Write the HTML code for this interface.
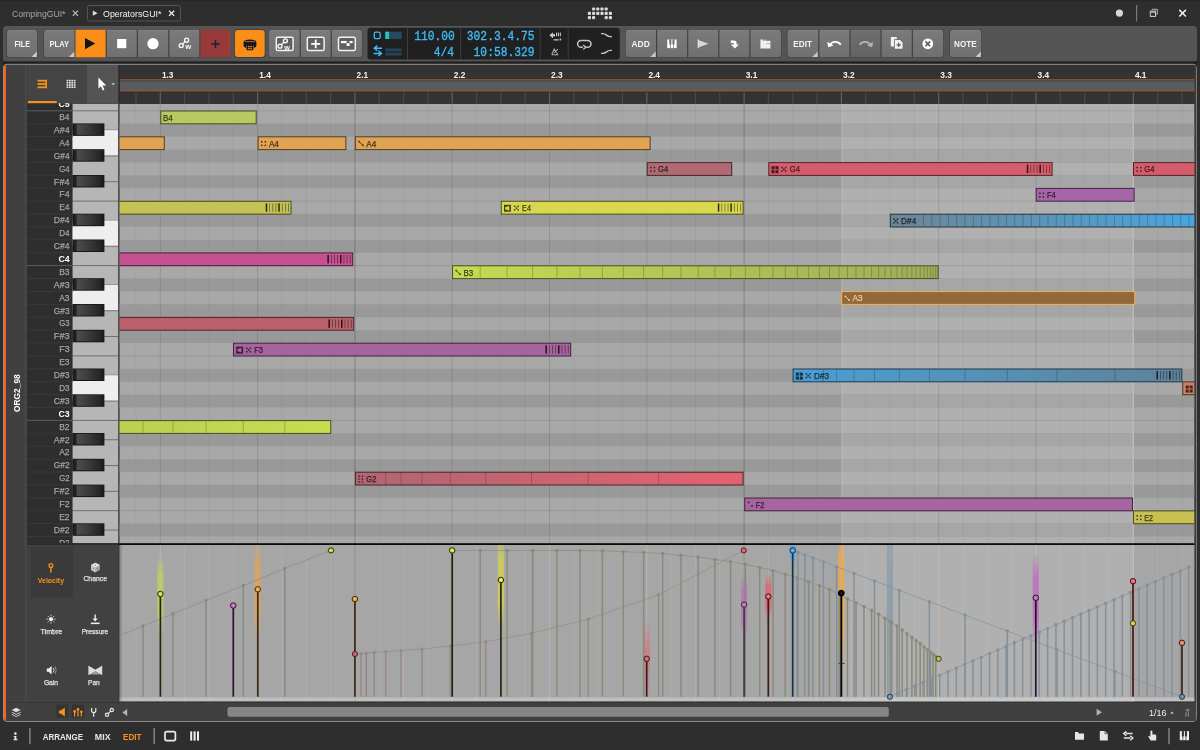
<!DOCTYPE html>
<html lang="en"><head><meta charset="utf-8"><title>OperatorsGUI - Note Editor</title>
<style>
html,body{margin:0;padding:0;background:#2e2e2e;overflow:hidden}
body{width:1200px;height:750px;font-family:"Liberation Sans",sans-serif}
svg{display:block;position:absolute;left:0;top:0;will-change:transform}
text{white-space:pre}
</style></head><body>
<svg width="1200" height="750" viewBox="0 0 1200 750">
<defs><linearGradient id="g1" x1="0" y1="0" x2="0" y2="1"><stop offset="0" stop-color="#7a7a7a" stop-opacity="1"/><stop offset="1" stop-color="#707070" stop-opacity="1"/></linearGradient>
<linearGradient id="g2" x1="0" y1="0" x2="1" y2="0"><stop offset="0" stop-color="#ec6c2a" stop-opacity="1"/><stop offset="1" stop-color="#ff5600" stop-opacity="1"/></linearGradient>
<linearGradient id="g3" x1="0" y1="0" x2="1" y2="0"><stop offset="0" stop-color="#6c8696" stop-opacity="1"/><stop offset="1" stop-color="#4aa4de" stop-opacity="1"/></linearGradient>
<linearGradient id="g4" x1="0" y1="0" x2="1" y2="0"><stop offset="0" stop-color="#c8d952" stop-opacity="1"/><stop offset="1" stop-color="#9ead5a" stop-opacity="1"/></linearGradient>
<linearGradient id="g5" x1="0" y1="0" x2="1" y2="0"><stop offset="0" stop-color="#4b9ed3" stop-opacity="1"/><stop offset="1" stop-color="#608298" stop-opacity="1"/></linearGradient>
<linearGradient id="g6" x1="0" y1="0" x2="1" y2="0"><stop offset="0" stop-color="#bad050" stop-opacity="1"/><stop offset="1" stop-color="#c6de50" stop-opacity="1"/></linearGradient>
<linearGradient id="g7" x1="0" y1="0" x2="1" y2="0"><stop offset="0" stop-color="#b06672" stop-opacity="1"/><stop offset="1" stop-color="#e46270" stop-opacity="1"/></linearGradient>
<linearGradient id="g8" x1="0" y1="0" x2="1" y2="0"><stop offset="0" stop-color="#1a1a1a" stop-opacity="1"/><stop offset="0.1" stop-color="#232323" stop-opacity="1"/><stop offset="0.16" stop-color="#4c4c4c" stop-opacity="1"/><stop offset="0.55" stop-color="#383838" stop-opacity="1"/><stop offset="0.9" stop-color="#242424" stop-opacity="1"/><stop offset="1" stop-color="#181818" stop-opacity="1"/></linearGradient>
<linearGradient id="g9" x1="0" y1="0" x2="1" y2="0"><stop offset="0" stop-color="#000000" stop-opacity="0.25"/><stop offset="1" stop-color="#000000" stop-opacity="0"/></linearGradient>
<linearGradient id="g10" x1="0" y1="0" x2="0" y2="1"><stop offset="0" stop-color="#c3e04a" stop-opacity="0"/><stop offset="0.28" stop-color="#c3e04a" stop-opacity="0.6"/><stop offset="0.72" stop-color="#c3e04a" stop-opacity="0.6"/><stop offset="1" stop-color="#c3e04a" stop-opacity="0"/></linearGradient>
<linearGradient id="g11" x1="0" y1="0" x2="0" y2="1"><stop offset="0" stop-color="#f0a040" stop-opacity="0"/><stop offset="0.28" stop-color="#f0a040" stop-opacity="0.62"/><stop offset="0.72" stop-color="#f0a040" stop-opacity="0.62"/><stop offset="1" stop-color="#f0a040" stop-opacity="0"/></linearGradient>
<linearGradient id="g12" x1="0" y1="0" x2="0" y2="1"><stop offset="0" stop-color="#dcd648" stop-opacity="0"/><stop offset="0.28" stop-color="#dcd648" stop-opacity="0.7"/><stop offset="0.72" stop-color="#dcd648" stop-opacity="0.7"/><stop offset="1" stop-color="#dcd648" stop-opacity="0"/></linearGradient>
<linearGradient id="g13" x1="0" y1="0" x2="0" y2="1"><stop offset="0" stop-color="#e06070" stop-opacity="0"/><stop offset="0.4" stop-color="#e06070" stop-opacity="0.55"/><stop offset="0.55" stop-color="#e06070" stop-opacity="0.5"/><stop offset="1" stop-color="#e06070" stop-opacity="0.12"/></linearGradient>
<linearGradient id="g14" x1="0" y1="0" x2="0" y2="1"><stop offset="0" stop-color="#c060c8" stop-opacity="0"/><stop offset="0.28" stop-color="#c060c8" stop-opacity="0.6"/><stop offset="0.72" stop-color="#c060c8" stop-opacity="0.6"/><stop offset="1" stop-color="#c060c8" stop-opacity="0"/></linearGradient>
<linearGradient id="g15" x1="0" y1="0" x2="0" y2="1"><stop offset="0" stop-color="#f05060" stop-opacity="0"/><stop offset="0.28" stop-color="#f05060" stop-opacity="0.65"/><stop offset="0.72" stop-color="#f05060" stop-opacity="0.65"/><stop offset="1" stop-color="#f05060" stop-opacity="0"/></linearGradient>
<linearGradient id="g16" x1="0" y1="0" x2="0" y2="1"><stop offset="0" stop-color="#40a8f0" stop-opacity="0"/><stop offset="0.28" stop-color="#40a8f0" stop-opacity="0.55"/><stop offset="0.72" stop-color="#40a8f0" stop-opacity="0.55"/><stop offset="1" stop-color="#40a8f0" stop-opacity="0"/></linearGradient>
<linearGradient id="g17" x1="0" y1="0" x2="0" y2="1"><stop offset="0" stop-color="#f0a848" stop-opacity="0"/><stop offset="0.28" stop-color="#f0a848" stop-opacity="0.78"/><stop offset="0.72" stop-color="#f0a848" stop-opacity="0.78"/><stop offset="1" stop-color="#f0a848" stop-opacity="0"/></linearGradient>
<linearGradient id="g18" x1="0" y1="0" x2="0" y2="1"><stop offset="0" stop-color="#7f94a4" stop-opacity="0.5"/><stop offset="0.5" stop-color="#7f94a4" stop-opacity="0.7"/><stop offset="1" stop-color="#7f94a4" stop-opacity="0.6"/></linearGradient>
<linearGradient id="g19" x1="0" y1="0" x2="0" y2="1"><stop offset="0" stop-color="#c058c0" stop-opacity="0"/><stop offset="0.28" stop-color="#c058c0" stop-opacity="0.65"/><stop offset="0.72" stop-color="#c058c0" stop-opacity="0.65"/><stop offset="1" stop-color="#c058c0" stop-opacity="0"/></linearGradient></defs>
<rect x="0" y="0" width="1200" height="750" fill="#2e2e2e"/>
<rect x="0" y="0" width="1200" height="1.6" fill="#272727"/>
<text x="12" y="16.9" font-family='"Liberation Sans", sans-serif' font-size="9.3" fill="#a9a9a9" textLength="53.5" lengthAdjust="spacingAndGlyphs">CompingGUI*</text>
<line x1="72.8" y1="10.7" x2="78" y2="15.9" stroke="#c0c0c0" stroke-width="1.2"/>
<line x1="78" y1="10.7" x2="72.8" y2="15.9" stroke="#c0c0c0" stroke-width="1.2"/>
<rect x="87.5" y="5.5" width="93" height="15.5" fill="#2c2c2c" rx="2" stroke="#555555" stroke-width="1"/>
<path d="M92.8 10.6 L97.6 13.2 L92.8 15.8 Z" fill="#dddddd"/>
<text x="103" y="16.9" font-family='"Liberation Sans", sans-serif' font-size="9.3" fill="#f2f2f2" textLength="58.5" lengthAdjust="spacingAndGlyphs">OperatorsGUI*</text>
<line x1="169" y1="10.7" x2="174.2" y2="15.9" stroke="#f0f0f0" stroke-width="1.3"/>
<line x1="174.2" y1="10.7" x2="169" y2="15.9" stroke="#f0f0f0" stroke-width="1.3"/>
<rect x="592" y="7.4" width="3.2" height="3.2" fill="#d8d8d8" rx="1"/>
<rect x="596.2" y="7.4" width="3.2" height="3.2" fill="#d8d8d8" rx="1"/>
<rect x="600.4" y="7.4" width="3.2" height="3.2" fill="#d8d8d8" rx="1"/>
<rect x="604.6" y="7.4" width="3.2" height="3.2" fill="#d8d8d8" rx="1"/>
<rect x="587.8" y="11.7" width="3.2" height="3.2" fill="#d8d8d8" rx="1"/>
<rect x="592" y="11.7" width="3.2" height="3.2" fill="#d8d8d8" rx="1"/>
<rect x="596.2" y="11.7" width="3.2" height="3.2" fill="#d8d8d8" rx="1"/>
<rect x="600.4" y="11.7" width="3.2" height="3.2" fill="#d8d8d8" rx="1"/>
<rect x="604.6" y="11.7" width="3.2" height="3.2" fill="#d8d8d8" rx="1"/>
<rect x="608.8" y="11.7" width="3.2" height="3.2" fill="#d8d8d8" rx="1"/>
<rect x="587.8" y="16" width="3.2" height="3.2" fill="#d8d8d8" rx="1"/>
<rect x="592" y="16" width="3.2" height="3.2" fill="#d8d8d8" rx="1"/>
<rect x="604.6" y="16" width="3.2" height="3.2" fill="#d8d8d8" rx="1"/>
<rect x="608.8" y="16" width="3.2" height="3.2" fill="#d8d8d8" rx="1"/>
<circle cx="1119.4" cy="13.1" r="3.6" fill="#d6d6d6"/>
<line x1="1136.6" y1="5" x2="1136.6" y2="21.5" stroke="#7a7a7a" stroke-width="1.2"/>
<path d="M1152.2 10.2 V9.3 H1157.3 V14.3 H1156.3" fill="none" stroke="#b4b4b4" stroke-width="1"/>
<rect x="1150.3" y="11.2" width="5.2" height="5.2" fill="none" stroke="#cfcfcf" stroke-width="1"/>
<rect x="1150.3" y="11.2" width="5.2" height="1.6" fill="#b4b4b4"/>
<line x1="1179.3" y1="9.9" x2="1185.9" y2="16.5" stroke="#f0f0f0" stroke-width="1.5"/>
<line x1="1185.9" y1="9.9" x2="1179.3" y2="16.5" stroke="#f0f0f0" stroke-width="1.5"/>
<rect x="3" y="26.3" width="1194" height="35.2" fill="#545454" rx="3"/>
<rect x="3" y="61.6" width="1194" height="2.6" fill="#202020"/>
<line x1="5" y1="26.8" x2="1194.5" y2="26.8" stroke="#5c5c5c" stroke-width="1"/>
<rect x="6.4" y="29.2" width="31.4" height="28.7" fill="#404040" rx="3.4"/>
<rect x="7" y="29.8" width="30.2" height="27.5" fill="url(#g1)" rx="3"/>
<line x1="9" y1="30.3" x2="35.2" y2="30.3" stroke="#848484" stroke-width="1" opacity="0.55"/>
<text x="22.2" y="46.7" font-family='"Liberation Sans", sans-serif' font-size="8.3" fill="#f4f4f4" font-weight="bold" text-anchor="middle" textLength="15.6" lengthAdjust="spacingAndGlyphs">FILE</text>
<path d="M36.9 51.5 L36.9 57 L31.4 57 Z" fill="#c9c9c9"/>
<rect x="43.4" y="29.2" width="187.8" height="28.7" fill="#404040" rx="3.4"/>
<rect x="44" y="29.8" width="186.6" height="27.5" fill="url(#g1)" rx="3"/>
<line x1="46" y1="30.3" x2="228.6" y2="30.3" stroke="#848484" stroke-width="1" opacity="0.55"/>
<rect x="75.1" y="29.8" width="30.9" height="27.5" fill="#fa8e18"/>
<rect x="74.6" y="29.8" width="0.8" height="27.5" fill="#2e3c4c"/>
<path d="M200.2 29.8 H227.6 a3 3 0 0 1 3 3 V54.3 a3 3 0 0 1 -3 3 H200.2 Z" fill="#993a3a"/>
<line x1="106.2" y1="29.8" x2="106.2" y2="57.3" stroke="#3c3c3c" stroke-width="1.1"/>
<line x1="137.3" y1="29.8" x2="137.3" y2="57.3" stroke="#3c3c3c" stroke-width="1.1"/>
<line x1="168.8" y1="29.8" x2="168.8" y2="57.3" stroke="#3c3c3c" stroke-width="1.1"/>
<line x1="199.9" y1="29.8" x2="199.9" y2="57.3" stroke="#3c3c3c" stroke-width="1.1"/>
<text x="59.3" y="46.7" font-family='"Liberation Sans", sans-serif' font-size="8.3" fill="#f4f4f4" font-weight="bold" text-anchor="middle" textLength="19.5" lengthAdjust="spacingAndGlyphs">PLAY</text>
<path d="M74.3 51.5 L74.3 57 L68.8 57 Z" fill="#c9c9c9"/>
<path d="M85 38 L95.2 43.6 L85 49.2 Z" fill="#10131a"/>
<rect x="117.1" y="39" width="9.2" height="9.2" fill="#ffffff"/>
<circle cx="153" cy="43.7" r="5.6" fill="#ffffff"/>
<line x1="181.5" y1="45.2" x2="186.2" y2="40.4" stroke="#ffffff" stroke-width="1.2"/>
<circle cx="181.2" cy="45.6" r="2" fill="#6f6f6f" stroke="#ffffff" stroke-width="1.3"/>
<circle cx="186.6" cy="40.2" r="2" fill="#6f6f6f" stroke="#ffffff" stroke-width="1.3"/>
<text x="185.4" y="49.2" font-family='"Liberation Sans", sans-serif' font-size="7.2" fill="#ffffff" font-weight="bold" textLength="5.6" lengthAdjust="spacingAndGlyphs">w</text>
<line x1="211.3" y1="43.9" x2="219.7" y2="43.9" stroke="#1d2430" stroke-width="1.6"/>
<line x1="215.5" y1="39.7" x2="215.5" y2="48.1" stroke="#1d2430" stroke-width="1.6"/>
<rect x="234.1" y="29.3" width="31.4" height="28.5" fill="#2e3c4c" rx="3.5"/>
<rect x="234.9" y="30.1" width="29.8" height="26.9" fill="#fb8e16" rx="3"/>
<path d="M243.6 42.2 a6.4 2.6 0 0 1 12.8 0 V45.8 a6.4 2.6 0 0 1 -2.6 2.1 V45.2 H246.2 V47.9 a6.4 2.6 0 0 1 -2.6 -2.1 Z" fill="#141826"/>
<rect x="246.6" y="44.6" width="6.8" height="5.6" fill="#141826" rx="0.8"/>
<rect x="248.1" y="45.9" width="1.5" height="1.4" fill="#fa9116"/>
<rect x="250.4" y="45.9" width="1.5" height="1.4" fill="#fa9116"/>
<rect x="248.1" y="48" width="1.5" height="1.3" fill="#fa9116"/>
<rect x="250.4" y="48" width="1.5" height="1.3" fill="#fa9116"/>
<line x1="245" y1="41.6" x2="255" y2="41.6" stroke="#fa9116" stroke-width="0.7"/>
<rect x="268.2" y="29.2" width="94.4" height="28.7" fill="#404040" rx="3.4"/>
<rect x="268.8" y="29.8" width="93.2" height="27.5" fill="url(#g1)" rx="3"/>
<line x1="270.8" y1="30.3" x2="360" y2="30.3" stroke="#848484" stroke-width="1" opacity="0.55"/>
<line x1="300.2" y1="29.8" x2="300.2" y2="57.3" stroke="#3c3c3c" stroke-width="1.1"/>
<line x1="331.2" y1="29.8" x2="331.2" y2="57.3" stroke="#3c3c3c" stroke-width="1.1"/>
<rect x="276.3" y="37.3" width="16.8" height="13.2" fill="#606060" rx="1.6" stroke="#f2f2f2" stroke-width="1.5"/>
<line x1="280.3" y1="45.8" x2="285" y2="41" stroke="#ffffff" stroke-width="1.2"/>
<circle cx="280" cy="46.2" r="2" fill="#6f6f6f" stroke="#ffffff" stroke-width="1.3"/>
<circle cx="285.4" cy="40.8" r="2" fill="#6f6f6f" stroke="#ffffff" stroke-width="1.3"/>
<text x="284.2" y="49.8" font-family='"Liberation Sans", sans-serif' font-size="7.2" fill="#ffffff" font-weight="bold" textLength="5.6" lengthAdjust="spacingAndGlyphs">w</text>
<rect x="307.3" y="37.3" width="16.8" height="13.2" fill="#606060" rx="1.6" stroke="#f2f2f2" stroke-width="1.5"/>
<line x1="311.2" y1="43.9" x2="320.2" y2="43.9" stroke="#ffffff" stroke-width="1.8"/>
<line x1="315.7" y1="39.6" x2="315.7" y2="48.2" stroke="#ffffff" stroke-width="1.8"/>
<rect x="338.5" y="37.3" width="16.8" height="13.2" fill="#606060" rx="1.6" stroke="#f2f2f2" stroke-width="1.5"/>
<rect x="341" y="41" width="5.6" height="2.2" fill="#ffffff"/>
<rect x="346.6" y="43.2" width="3" height="2.8" fill="#ffffff"/>
<rect x="349.6" y="41" width="3" height="2.2" fill="#ffffff"/>
<rect x="367.5" y="27.8" width="252.3" height="31.6" fill="#202020" rx="3"/>
<line x1="407.5" y1="27.8" x2="407.5" y2="59.4" stroke="#3e3e3e" stroke-width="1"/>
<line x1="460.6" y1="27.8" x2="460.6" y2="59.4" stroke="#3e3e3e" stroke-width="1"/>
<line x1="540.2" y1="27.8" x2="540.2" y2="59.4" stroke="#3e3e3e" stroke-width="1"/>
<line x1="568.2" y1="27.8" x2="568.2" y2="59.4" stroke="#3e3e3e" stroke-width="1"/>
<rect x="374.2" y="32.2" width="6" height="6.4" fill="none" rx="1.6" stroke="#3fbcf8" stroke-width="1.3"/>
<rect x="385.3" y="31.7" width="16.4" height="7.3" fill="#27495c"/>
<rect x="385.3" y="31.7" width="3.8" height="7.3" fill="#1cc8c8"/>
<path d="M382 48.2 H374.5 M377.3 45.6 L374.3 48.2 L377.3 50.8" fill="none" stroke="#3fbcf8" stroke-width="1.5"/>
<path d="M373.6 53.4 H381.2 M378.4 50.8 L381.4 53.4 L378.4 56" fill="none" stroke="#3fbcf8" stroke-width="1.5"/>
<rect x="385.3" y="48.5" width="16.4" height="3" fill="#23445a"/>
<rect x="385.3" y="52.6" width="16.4" height="3" fill="#23445a"/>
<text x="454.9" y="40.1" font-family='"Liberation Mono", monospace' font-size="13.3" fill="#3fbcf8" text-anchor="end" textLength="40.6" lengthAdjust="spacingAndGlyphs" stroke="#3fbcf8" stroke-width="0.35">110.00</text>
<text x="454" y="55.7" font-family='"Liberation Mono", monospace' font-size="13.3" fill="#3fbcf8" text-anchor="end" textLength="20.2" lengthAdjust="spacingAndGlyphs" stroke="#3fbcf8" stroke-width="0.35">4/4</text>
<text x="534.6" y="40.1" font-family='"Liberation Mono", monospace' font-size="13.3" fill="#3fbcf8" text-anchor="end" textLength="67.8" lengthAdjust="spacingAndGlyphs" stroke="#3fbcf8" stroke-width="0.35">302.3.4.75</text>
<text x="534.6" y="55.7" font-family='"Liberation Mono", monospace' font-size="13.3" fill="#3fbcf8" text-anchor="end" textLength="61" lengthAdjust="spacingAndGlyphs" stroke="#3fbcf8" stroke-width="0.35">10:58.329</text>
<path d="M549.3 35.2 L553 32.2 V34 H555 V36.4 H553 V38.2 Z" fill="#c4c4c4"/>
<rect x="556" y="32.6" width="1.1" height="3.6" fill="#c4c4c4"/>
<rect x="557.9" y="32.6" width="1.1" height="3.6" fill="#c4c4c4"/>
<rect x="559.8" y="32.6" width="1.1" height="3.6" fill="#c4c4c4"/>
<rect x="553.6" y="39.2" width="5" height="1.3" fill="#c4c4c4"/>
<rect x="559.6" y="38.6" width="1.6" height="1.8" fill="#c4c4c4"/>
<path d="M551.8 54.8 L554.2 49 L555.8 52.2 M551.8 54.8 H557.6 L556.6 52.4 M554.4 52.8 L557.8 49.2" fill="none" stroke="#aeaeae" stroke-width="1.1"/>
<path d="M581 40.5 H587.6 a3.4 3.4 0 0 1 0 6.8 H586.4 M582.8 47.3 H581 a3.4 3.4 0 0 1 0 -6.8" fill="none" stroke="#c6c6c6" stroke-width="1.5"/>
<path d="M583.2 45 L586 47.3 L583.2 49.2" fill="none" stroke="#c6c6c6" stroke-width="1.3"/>
<path d="M601 33.6 H603 C606.2 33.6 606.8 36.6 610 36.6 H612" fill="none" stroke="#c8c8c8" stroke-width="1.4"/>
<path d="M601 53.4 H603 C606.2 53.4 606.8 50.4 610 50.4 H612" fill="none" stroke="#c8c8c8" stroke-width="1.4"/>
<rect x="625" y="29.2" width="156.6" height="28.7" fill="#404040" rx="3.4"/>
<rect x="625.6" y="29.8" width="155.4" height="27.5" fill="url(#g1)" rx="3"/>
<line x1="627.6" y1="30.3" x2="779" y2="30.3" stroke="#848484" stroke-width="1" opacity="0.55"/>
<line x1="656.6" y1="29.8" x2="656.6" y2="57.3" stroke="#3c3c3c" stroke-width="1.1"/>
<line x1="687.7" y1="29.8" x2="687.7" y2="57.3" stroke="#3c3c3c" stroke-width="1.1"/>
<line x1="718.8" y1="29.8" x2="718.8" y2="57.3" stroke="#3c3c3c" stroke-width="1.1"/>
<line x1="749.9" y1="29.8" x2="749.9" y2="57.3" stroke="#3c3c3c" stroke-width="1.1"/>
<text x="640.6" y="46.7" font-family='"Liberation Sans", sans-serif' font-size="8.3" fill="#f4f4f4" font-weight="bold" text-anchor="middle" textLength="18.3" lengthAdjust="spacingAndGlyphs">ADD</text>
<path d="M655.7 51.5 L655.7 57 L650.2 57 Z" fill="#c9c9c9"/>
<rect x="667.2" y="39.5" width="9.4" height="8.6" fill="#ffffff"/>
<rect x="669.98" y="39.5" width="0.7" height="8.6" fill="#6f6f6f"/>
<rect x="669.33" y="39.5" width="2" height="4.99" fill="#6f6f6f"/>
<rect x="673.12" y="39.5" width="0.7" height="8.6" fill="#6f6f6f"/>
<rect x="672.47" y="39.5" width="2" height="4.99" fill="#6f6f6f"/>
<path d="M697.6 39.4 H699 V40.2 L708.4 43.7 L699 47.2 V48.2 H697.6 Z" fill="#d8d8d8"/>
<path d="M730.8 40.6 H733.8 a2.8 2.8 0 0 1 2.8 2.8 V44.6 H739 L734.9 48.6 L730.8 44.6 H733.9 V44 a1 1 0 0 0 -1 -1 H730.8 Z" fill="#ffffff"/>
<path d="M760.4 39.6 H763 V40.8 H770.4 V48.4 H760.4 Z" fill="#f0f0f0"/>
<rect x="764.2" y="39.6" width="1.4" height="1.2" fill="#f0f0f0"/>
<line x1="766.4" y1="43.6" x2="770.4" y2="43.6" stroke="#8a8a8a" stroke-width="0.6"/>
<rect x="786.9" y="29.2" width="156.9" height="28.7" fill="#404040" rx="3.4"/>
<rect x="787.5" y="29.8" width="155.7" height="27.5" fill="url(#g1)" rx="3"/>
<line x1="789.5" y1="30.3" x2="941.2" y2="30.3" stroke="#848484" stroke-width="1" opacity="0.55"/>
<line x1="818.8" y1="29.8" x2="818.8" y2="57.3" stroke="#3c3c3c" stroke-width="1.1"/>
<line x1="850" y1="29.8" x2="850" y2="57.3" stroke="#3c3c3c" stroke-width="1.1"/>
<line x1="881" y1="29.8" x2="881" y2="57.3" stroke="#3c3c3c" stroke-width="1.1"/>
<line x1="912.3" y1="29.8" x2="912.3" y2="57.3" stroke="#3c3c3c" stroke-width="1.1"/>
<rect x="850.6" y="29.8" width="29.8" height="27.5" fill="#000000" opacity="0.1"/>
<text x="802.6" y="46.7" font-family='"Liberation Sans", sans-serif' font-size="8.3" fill="#f4f4f4" font-weight="bold" text-anchor="middle" textLength="18.6" lengthAdjust="spacingAndGlyphs">EDIT</text>
<path d="M817.7 51.5 L817.7 57 L812.2 57 Z" fill="#c9c9c9"/>
<path d="M829.6 45.8 C832 40.8 837.8 40.8 840.8 44.8" fill="none" stroke="#ffffff" stroke-width="1.9"/>
<path d="M827.3 41.8 L828.2 47.2 L833.4 45.4 Z" fill="#ffffff"/>
<path d="M859.6 44.8 C862.6 40.8 868.4 40.8 870.8 45.8" fill="none" stroke="#b4b4b4" stroke-width="1.8"/>
<path d="M873.1 41.8 L872.2 47.2 L867 45.4 Z" fill="#b4b4b4"/>
<rect x="890.8" y="37" width="6" height="9.4" fill="#f0f0f0" rx="0.6"/>
<rect x="894" y="39.2" width="9" height="10.2" fill="#707070"/>
<path d="M894.8 40 H900.2 L902.6 42.4 V48.8 H894.8 Z" fill="#f0f0f0"/>
<line x1="896.6" y1="44.9" x2="900.8" y2="44.9" stroke="#4a4a4a" stroke-width="1.1"/>
<line x1="898.7" y1="42.8" x2="898.7" y2="47" stroke="#4a4a4a" stroke-width="1.1"/>
<circle cx="927.8" cy="43.8" r="5.4" fill="#ffffff"/>
<line x1="925.4" y1="41.4" x2="930.2" y2="46.2" stroke="#5a5a5a" stroke-width="1.5"/>
<line x1="930.2" y1="41.4" x2="925.4" y2="46.2" stroke="#5a5a5a" stroke-width="1.5"/>
<rect x="949.4" y="29.2" width="32.4" height="28.7" fill="#404040" rx="3.4"/>
<rect x="950" y="29.8" width="31.2" height="27.5" fill="url(#g1)" rx="3"/>
<line x1="952" y1="30.3" x2="979.2" y2="30.3" stroke="#848484" stroke-width="1" opacity="0.55"/>
<text x="965.3" y="46.7" font-family='"Liberation Sans", sans-serif' font-size="8.3" fill="#f4f4f4" font-weight="bold" text-anchor="middle" textLength="22.5" lengthAdjust="spacingAndGlyphs">NOTE</text>
<path d="M980.9 51.5 L980.9 57 L975.4 57 Z" fill="#c9c9c9"/>
<rect x="3.5" y="64.3" width="1192.8" height="657.1" fill="#404040" rx="3" stroke="#939393" stroke-width="1"/>
<rect x="4" y="65" width="23" height="656" fill="#404040" rx="2"/>
<rect x="24.8" y="65" width="2.2" height="637" fill="#474747"/>
<path d="M6.3 65.2 H6 a2.4 2.4 0 0 0 -2.2 2.4 V718.4 a2.4 2.4 0 0 0 2.2 2.4 H6.3 Z" fill="url(#g2)"/>
<rect x="6.3" y="66" width="0.8" height="654" fill="#2e4450"/>
<text x="0" y="0" font-family='"Liberation Sans", sans-serif' font-size="9.6" fill="#ffffff" font-weight="bold" textLength="37.8" lengthAdjust="spacingAndGlyphs" transform="translate(20.2 412) rotate(-90)">ORG2_98</text>
<rect x="119.3" y="65" width="1075.3" height="14.6" fill="#333333"/>
<rect x="119.3" y="79.4" width="1075.3" height="1.2" fill="#bd5f2b"/>
<rect x="119.3" y="80.5" width="1075.3" height="9.6" fill="#595b5c"/>
<rect x="119.3" y="90.4" width="1075.3" height="1.3" fill="#bd5f2b"/>
<rect x="119.3" y="91.7" width="1075.3" height="12.4" fill="#333333"/>
<rect x="119.3" y="91.7" width="1075.3" height="0.8" fill="#2a3238"/>
<rect x="119.3" y="80.5" width="1075.3" height="0.8" fill="#3a4248"/>
<text x="161.9" y="78.1" font-family='"Liberation Sans", sans-serif' font-size="9.8" fill="#f4f4f4" font-weight="bold" textLength="11.6" lengthAdjust="spacingAndGlyphs">1.3</text>
<text x="259.2" y="78.1" font-family='"Liberation Sans", sans-serif' font-size="9.8" fill="#f4f4f4" font-weight="bold" textLength="11.6" lengthAdjust="spacingAndGlyphs">1.4</text>
<text x="356.5" y="78.1" font-family='"Liberation Sans", sans-serif' font-size="9.8" fill="#f4f4f4" font-weight="bold" textLength="11.6" lengthAdjust="spacingAndGlyphs">2.1</text>
<text x="453.8" y="78.1" font-family='"Liberation Sans", sans-serif' font-size="9.8" fill="#f4f4f4" font-weight="bold" textLength="11.6" lengthAdjust="spacingAndGlyphs">2.2</text>
<text x="551.1" y="78.1" font-family='"Liberation Sans", sans-serif' font-size="9.8" fill="#f4f4f4" font-weight="bold" textLength="11.6" lengthAdjust="spacingAndGlyphs">2.3</text>
<text x="648.4" y="78.1" font-family='"Liberation Sans", sans-serif' font-size="9.8" fill="#f4f4f4" font-weight="bold" textLength="11.6" lengthAdjust="spacingAndGlyphs">2.4</text>
<text x="745.7" y="78.1" font-family='"Liberation Sans", sans-serif' font-size="9.8" fill="#f4f4f4" font-weight="bold" textLength="11.6" lengthAdjust="spacingAndGlyphs">3.1</text>
<text x="843" y="78.1" font-family='"Liberation Sans", sans-serif' font-size="9.8" fill="#f4f4f4" font-weight="bold" textLength="11.6" lengthAdjust="spacingAndGlyphs">3.2</text>
<text x="940.3" y="78.1" font-family='"Liberation Sans", sans-serif' font-size="9.8" fill="#f4f4f4" font-weight="bold" textLength="11.6" lengthAdjust="spacingAndGlyphs">3.3</text>
<text x="1037.6" y="78.1" font-family='"Liberation Sans", sans-serif' font-size="9.8" fill="#f4f4f4" font-weight="bold" textLength="11.6" lengthAdjust="spacingAndGlyphs">3.4</text>
<text x="1134.9" y="78.1" font-family='"Liberation Sans", sans-serif' font-size="9.8" fill="#f4f4f4" font-weight="bold" textLength="11.6" lengthAdjust="spacingAndGlyphs">4.1</text>
<clipPath id="gclip"><rect x="119.3" y="103.9" width="1075.3" height="439.4"/></clipPath>
<g clip-path="url(#gclip)">
<rect x="119.3" y="103.9" width="1075.3" height="439.4" fill="#a8a8a8"/>
<rect x="841.6" y="103.9" width="291.9" height="439.4" fill="#b0b0b0"/>
<line x1="119.3" y1="110.8" x2="1194.6" y2="110.8" stroke="#000000" stroke-width="1" opacity="0.09"/>
<rect x="119.3" y="123.7" width="1075.3" height="12.9" fill="#999999"/>
<rect x="841.6" y="123.7" width="291.9" height="12.9" fill="#a6a6a6"/>
<rect x="119.3" y="149.5" width="1075.3" height="12.9" fill="#999999"/>
<rect x="841.6" y="149.5" width="291.9" height="12.9" fill="#a6a6a6"/>
<rect x="119.3" y="175.3" width="1075.3" height="12.9" fill="#999999"/>
<rect x="841.6" y="175.3" width="291.9" height="12.9" fill="#a6a6a6"/>
<line x1="119.3" y1="201.1" x2="1194.6" y2="201.1" stroke="#000000" stroke-width="1" opacity="0.09"/>
<rect x="119.3" y="214" width="1075.3" height="12.9" fill="#999999"/>
<rect x="841.6" y="214" width="291.9" height="12.9" fill="#a6a6a6"/>
<rect x="119.3" y="239.8" width="1075.3" height="12.9" fill="#999999"/>
<rect x="841.6" y="239.8" width="291.9" height="12.9" fill="#a6a6a6"/>
<line x1="119.3" y1="265.6" x2="1194.6" y2="265.6" stroke="#000000" stroke-width="1" opacity="0.09"/>
<rect x="119.3" y="278.5" width="1075.3" height="12.9" fill="#999999"/>
<rect x="841.6" y="278.5" width="291.9" height="12.9" fill="#a6a6a6"/>
<rect x="119.3" y="304.3" width="1075.3" height="12.9" fill="#999999"/>
<rect x="841.6" y="304.3" width="291.9" height="12.9" fill="#a6a6a6"/>
<rect x="119.3" y="330.1" width="1075.3" height="12.9" fill="#999999"/>
<rect x="841.6" y="330.1" width="291.9" height="12.9" fill="#a6a6a6"/>
<line x1="119.3" y1="355.9" x2="1194.6" y2="355.9" stroke="#000000" stroke-width="1" opacity="0.09"/>
<rect x="119.3" y="368.8" width="1075.3" height="12.9" fill="#999999"/>
<rect x="841.6" y="368.8" width="291.9" height="12.9" fill="#a6a6a6"/>
<rect x="119.3" y="394.6" width="1075.3" height="12.9" fill="#999999"/>
<rect x="841.6" y="394.6" width="291.9" height="12.9" fill="#a6a6a6"/>
<line x1="119.3" y1="420.4" x2="1194.6" y2="420.4" stroke="#000000" stroke-width="1" opacity="0.09"/>
<rect x="119.3" y="433.3" width="1075.3" height="12.9" fill="#999999"/>
<rect x="841.6" y="433.3" width="291.9" height="12.9" fill="#a6a6a6"/>
<rect x="119.3" y="459.1" width="1075.3" height="12.9" fill="#999999"/>
<rect x="841.6" y="459.1" width="291.9" height="12.9" fill="#a6a6a6"/>
<rect x="119.3" y="484.9" width="1075.3" height="12.9" fill="#999999"/>
<rect x="841.6" y="484.9" width="291.9" height="12.9" fill="#a6a6a6"/>
<line x1="119.3" y1="510.7" x2="1194.6" y2="510.7" stroke="#000000" stroke-width="1" opacity="0.09"/>
<rect x="119.3" y="523.6" width="1075.3" height="12.9" fill="#999999"/>
<rect x="841.6" y="523.6" width="291.9" height="12.9" fill="#a6a6a6"/>
<line x1="135.98" y1="103.9" x2="135.98" y2="543.3" stroke="#000000" stroke-width="1" opacity="0.035"/>
<line x1="160.3" y1="103.9" x2="160.3" y2="543.3" stroke="#000000" stroke-width="1" opacity="0.11"/>
<line x1="184.62" y1="103.9" x2="184.62" y2="543.3" stroke="#000000" stroke-width="1" opacity="0.035"/>
<line x1="208.95" y1="103.9" x2="208.95" y2="543.3" stroke="#000000" stroke-width="1" opacity="0.035"/>
<line x1="233.28" y1="103.9" x2="233.28" y2="543.3" stroke="#000000" stroke-width="1" opacity="0.035"/>
<line x1="257.6" y1="103.9" x2="257.6" y2="543.3" stroke="#000000" stroke-width="1" opacity="0.11"/>
<line x1="281.93" y1="103.9" x2="281.93" y2="543.3" stroke="#000000" stroke-width="1" opacity="0.035"/>
<line x1="306.25" y1="103.9" x2="306.25" y2="543.3" stroke="#000000" stroke-width="1" opacity="0.035"/>
<line x1="330.58" y1="103.9" x2="330.58" y2="543.3" stroke="#000000" stroke-width="1" opacity="0.035"/>
<line x1="354.9" y1="103.9" x2="354.9" y2="543.3" stroke="#000000" stroke-width="1" opacity="0.22"/>
<line x1="379.23" y1="103.9" x2="379.23" y2="543.3" stroke="#000000" stroke-width="1" opacity="0.035"/>
<line x1="403.55" y1="103.9" x2="403.55" y2="543.3" stroke="#000000" stroke-width="1" opacity="0.035"/>
<line x1="427.88" y1="103.9" x2="427.88" y2="543.3" stroke="#000000" stroke-width="1" opacity="0.035"/>
<line x1="452.2" y1="103.9" x2="452.2" y2="543.3" stroke="#000000" stroke-width="1" opacity="0.11"/>
<line x1="476.52" y1="103.9" x2="476.52" y2="543.3" stroke="#000000" stroke-width="1" opacity="0.035"/>
<line x1="500.85" y1="103.9" x2="500.85" y2="543.3" stroke="#000000" stroke-width="1" opacity="0.035"/>
<line x1="525.17" y1="103.9" x2="525.17" y2="543.3" stroke="#000000" stroke-width="1" opacity="0.035"/>
<line x1="549.5" y1="103.9" x2="549.5" y2="543.3" stroke="#000000" stroke-width="1" opacity="0.11"/>
<line x1="573.83" y1="103.9" x2="573.83" y2="543.3" stroke="#000000" stroke-width="1" opacity="0.035"/>
<line x1="598.15" y1="103.9" x2="598.15" y2="543.3" stroke="#000000" stroke-width="1" opacity="0.035"/>
<line x1="622.48" y1="103.9" x2="622.48" y2="543.3" stroke="#000000" stroke-width="1" opacity="0.035"/>
<line x1="646.8" y1="103.9" x2="646.8" y2="543.3" stroke="#000000" stroke-width="1" opacity="0.11"/>
<line x1="671.12" y1="103.9" x2="671.12" y2="543.3" stroke="#000000" stroke-width="1" opacity="0.035"/>
<line x1="695.45" y1="103.9" x2="695.45" y2="543.3" stroke="#000000" stroke-width="1" opacity="0.035"/>
<line x1="719.78" y1="103.9" x2="719.78" y2="543.3" stroke="#000000" stroke-width="1" opacity="0.035"/>
<line x1="744.1" y1="103.9" x2="744.1" y2="543.3" stroke="#000000" stroke-width="1" opacity="0.22"/>
<line x1="768.42" y1="103.9" x2="768.42" y2="543.3" stroke="#000000" stroke-width="1" opacity="0.035"/>
<line x1="792.75" y1="103.9" x2="792.75" y2="543.3" stroke="#000000" stroke-width="1" opacity="0.035"/>
<line x1="817.08" y1="103.9" x2="817.08" y2="543.3" stroke="#000000" stroke-width="1" opacity="0.035"/>
<line x1="841.4" y1="103.9" x2="841.4" y2="543.3" stroke="#000000" stroke-width="1" opacity="0.11"/>
<line x1="865.72" y1="103.9" x2="865.72" y2="543.3" stroke="#000000" stroke-width="1" opacity="0.035"/>
<line x1="890.05" y1="103.9" x2="890.05" y2="543.3" stroke="#000000" stroke-width="1" opacity="0.035"/>
<line x1="914.38" y1="103.9" x2="914.38" y2="543.3" stroke="#000000" stroke-width="1" opacity="0.035"/>
<line x1="938.7" y1="103.9" x2="938.7" y2="543.3" stroke="#000000" stroke-width="1" opacity="0.11"/>
<line x1="963.03" y1="103.9" x2="963.03" y2="543.3" stroke="#000000" stroke-width="1" opacity="0.035"/>
<line x1="987.35" y1="103.9" x2="987.35" y2="543.3" stroke="#000000" stroke-width="1" opacity="0.035"/>
<line x1="1011.67" y1="103.9" x2="1011.67" y2="543.3" stroke="#000000" stroke-width="1" opacity="0.035"/>
<line x1="1036" y1="103.9" x2="1036" y2="543.3" stroke="#000000" stroke-width="1" opacity="0.11"/>
<line x1="1060.33" y1="103.9" x2="1060.33" y2="543.3" stroke="#000000" stroke-width="1" opacity="0.035"/>
<line x1="1084.65" y1="103.9" x2="1084.65" y2="543.3" stroke="#000000" stroke-width="1" opacity="0.035"/>
<line x1="1108.97" y1="103.9" x2="1108.97" y2="543.3" stroke="#000000" stroke-width="1" opacity="0.035"/>
<line x1="1133.3" y1="103.9" x2="1133.3" y2="543.3" stroke="#000000" stroke-width="1" opacity="0.22"/>
<line x1="1157.62" y1="103.9" x2="1157.62" y2="543.3" stroke="#000000" stroke-width="1" opacity="0.035"/>
<line x1="1181.95" y1="103.9" x2="1181.95" y2="543.3" stroke="#000000" stroke-width="1" opacity="0.035"/>
<line x1="841.9" y1="103.9" x2="841.9" y2="543.3" stroke="#bcbcbc" stroke-width="1.1"/>
<line x1="1133.2" y1="103.9" x2="1133.2" y2="543.3" stroke="#c4c4c4" stroke-width="1.3"/>
</g>
<line x1="135.98" y1="92.4" x2="135.98" y2="103.6" stroke="#494949" stroke-width="1.2"/>
<line x1="160.3" y1="92.4" x2="160.3" y2="103.6" stroke="#626262" stroke-width="1.2"/>
<line x1="184.62" y1="92.4" x2="184.62" y2="103.6" stroke="#494949" stroke-width="1.2"/>
<line x1="208.95" y1="92.4" x2="208.95" y2="103.6" stroke="#494949" stroke-width="1.2"/>
<line x1="233.28" y1="92.4" x2="233.28" y2="103.6" stroke="#494949" stroke-width="1.2"/>
<line x1="257.6" y1="92.4" x2="257.6" y2="103.6" stroke="#626262" stroke-width="1.2"/>
<line x1="281.93" y1="92.4" x2="281.93" y2="103.6" stroke="#494949" stroke-width="1.2"/>
<line x1="306.25" y1="92.4" x2="306.25" y2="103.6" stroke="#494949" stroke-width="1.2"/>
<line x1="330.58" y1="92.4" x2="330.58" y2="103.6" stroke="#494949" stroke-width="1.2"/>
<line x1="354.9" y1="92.4" x2="354.9" y2="103.6" stroke="#626262" stroke-width="1.2"/>
<line x1="379.23" y1="92.4" x2="379.23" y2="103.6" stroke="#494949" stroke-width="1.2"/>
<line x1="403.55" y1="92.4" x2="403.55" y2="103.6" stroke="#494949" stroke-width="1.2"/>
<line x1="427.88" y1="92.4" x2="427.88" y2="103.6" stroke="#494949" stroke-width="1.2"/>
<line x1="452.2" y1="92.4" x2="452.2" y2="103.6" stroke="#626262" stroke-width="1.2"/>
<line x1="476.52" y1="92.4" x2="476.52" y2="103.6" stroke="#494949" stroke-width="1.2"/>
<line x1="500.85" y1="92.4" x2="500.85" y2="103.6" stroke="#494949" stroke-width="1.2"/>
<line x1="525.17" y1="92.4" x2="525.17" y2="103.6" stroke="#494949" stroke-width="1.2"/>
<line x1="549.5" y1="92.4" x2="549.5" y2="103.6" stroke="#626262" stroke-width="1.2"/>
<line x1="573.83" y1="92.4" x2="573.83" y2="103.6" stroke="#494949" stroke-width="1.2"/>
<line x1="598.15" y1="92.4" x2="598.15" y2="103.6" stroke="#494949" stroke-width="1.2"/>
<line x1="622.48" y1="92.4" x2="622.48" y2="103.6" stroke="#494949" stroke-width="1.2"/>
<line x1="646.8" y1="92.4" x2="646.8" y2="103.6" stroke="#626262" stroke-width="1.2"/>
<line x1="671.12" y1="92.4" x2="671.12" y2="103.6" stroke="#494949" stroke-width="1.2"/>
<line x1="695.45" y1="92.4" x2="695.45" y2="103.6" stroke="#494949" stroke-width="1.2"/>
<line x1="719.78" y1="92.4" x2="719.78" y2="103.6" stroke="#494949" stroke-width="1.2"/>
<line x1="744.1" y1="92.4" x2="744.1" y2="103.6" stroke="#626262" stroke-width="1.2"/>
<line x1="768.42" y1="92.4" x2="768.42" y2="103.6" stroke="#494949" stroke-width="1.2"/>
<line x1="792.75" y1="92.4" x2="792.75" y2="103.6" stroke="#494949" stroke-width="1.2"/>
<line x1="817.08" y1="92.4" x2="817.08" y2="103.6" stroke="#494949" stroke-width="1.2"/>
<line x1="841.4" y1="92.4" x2="841.4" y2="103.6" stroke="#626262" stroke-width="1.2"/>
<line x1="865.72" y1="92.4" x2="865.72" y2="103.6" stroke="#494949" stroke-width="1.2"/>
<line x1="890.05" y1="92.4" x2="890.05" y2="103.6" stroke="#494949" stroke-width="1.2"/>
<line x1="914.38" y1="92.4" x2="914.38" y2="103.6" stroke="#494949" stroke-width="1.2"/>
<line x1="938.7" y1="92.4" x2="938.7" y2="103.6" stroke="#626262" stroke-width="1.2"/>
<line x1="963.03" y1="92.4" x2="963.03" y2="103.6" stroke="#494949" stroke-width="1.2"/>
<line x1="987.35" y1="92.4" x2="987.35" y2="103.6" stroke="#494949" stroke-width="1.2"/>
<line x1="1011.67" y1="92.4" x2="1011.67" y2="103.6" stroke="#494949" stroke-width="1.2"/>
<line x1="1036" y1="92.4" x2="1036" y2="103.6" stroke="#626262" stroke-width="1.2"/>
<line x1="1060.33" y1="92.4" x2="1060.33" y2="103.6" stroke="#494949" stroke-width="1.2"/>
<line x1="1084.65" y1="92.4" x2="1084.65" y2="103.6" stroke="#494949" stroke-width="1.2"/>
<line x1="1108.97" y1="92.4" x2="1108.97" y2="103.6" stroke="#494949" stroke-width="1.2"/>
<line x1="1133.3" y1="92.4" x2="1133.3" y2="103.6" stroke="#626262" stroke-width="1.2"/>
<line x1="1157.62" y1="92.4" x2="1157.62" y2="103.6" stroke="#494949" stroke-width="1.2"/>
<line x1="1181.95" y1="92.4" x2="1181.95" y2="103.6" stroke="#494949" stroke-width="1.2"/>
<g clip-path="url(#gclip)">
<rect x="160.3" y="110.5" width="96.4" height="13.8" fill="#454c25"/>
<rect x="161.3" y="111.5" width="94.4" height="11.8" fill="#b6c962"/>
<text x="162.9" y="120.7" font-family='"Liberation Sans", sans-serif' font-size="9" fill="#373c1d" textLength="9.7" lengthAdjust="spacingAndGlyphs" stroke="#373c1d" stroke-width="0.25">B4</text>
<rect x="118" y="136.3" width="46.8" height="13.8" fill="#553e20"/>
<rect x="119" y="137.3" width="44.8" height="11.8" fill="#e0a353"/>
<rect x="257.6" y="136.3" width="88.8" height="13.8" fill="#553e20"/>
<rect x="258.6" y="137.3" width="86.8" height="11.8" fill="#e0a353"/>
<rect x="261" y="141" width="1.5" height="1.5" fill="#433119"/>
<rect x="261" y="144.6" width="1.5" height="1.5" fill="#433119"/>
<rect x="264.6" y="141" width="1.5" height="1.5" fill="#433119"/>
<rect x="264.6" y="144.6" width="1.5" height="1.5" fill="#433119"/>
<text x="268.9" y="146.5" font-family='"Liberation Sans", sans-serif' font-size="9" fill="#433119" textLength="10" lengthAdjust="spacingAndGlyphs" stroke="#433119" stroke-width="0.25">A4</text>
<rect x="354.9" y="136.3" width="295.7" height="13.8" fill="#553e20"/>
<rect x="355.9" y="137.3" width="293.7" height="11.8" fill="#e0a353"/>
<line x1="358.9" y1="141.4" x2="362.9" y2="145.4" stroke="#433119" stroke-width="1"/>
<rect x="358.3" y="140.8" width="1.5" height="1.5" fill="#433119"/>
<rect x="362" y="144.5" width="1.6" height="1.6" fill="#433119"/>
<text x="366.2" y="146.5" font-family='"Liberation Sans", sans-serif' font-size="9" fill="#433119" textLength="10" lengthAdjust="spacingAndGlyphs" stroke="#433119" stroke-width="0.25">A4</text>
<rect x="646.7" y="162.1" width="85.5" height="13.8" fill="#43282c"/>
<rect x="647.7" y="163.1" width="83.5" height="11.8" fill="#b16a74"/>
<rect x="650.1" y="166.8" width="1.5" height="1.5" fill="#352023"/>
<rect x="650.1" y="170.4" width="1.5" height="1.5" fill="#352023"/>
<rect x="653.7" y="166.8" width="1.5" height="1.5" fill="#352023"/>
<rect x="653.7" y="170.4" width="1.5" height="1.5" fill="#352023"/>
<text x="658" y="172.3" font-family='"Liberation Sans", sans-serif' font-size="9" fill="#352023" textLength="10.2" lengthAdjust="spacingAndGlyphs" stroke="#352023" stroke-width="0.25">G4</text>
<rect x="768.3" y="162.1" width="284.3" height="13.8" fill="#512329"/>
<rect x="769.3" y="163.1" width="282.3" height="11.8" fill="#d55d6b"/>
<rect x="1026.8" y="164.7" width="1.5" height="8.3" fill="#1a0b0d" opacity="0.9"/>
<rect x="1030.35" y="164.7" width="0.8" height="8.3" fill="#1a0b0d" opacity="0.55"/>
<rect x="1033.5" y="164.7" width="0.8" height="8.3" fill="#1a0b0d" opacity="0.55"/>
<rect x="1036.65" y="164.7" width="0.8" height="8.3" fill="#1a0b0d" opacity="0.55"/>
<rect x="1039.4" y="164.7" width="1.5" height="8.3" fill="#1a0b0d" opacity="0.9"/>
<rect x="1042.95" y="164.7" width="0.8" height="8.3" fill="#1a0b0d" opacity="0.55"/>
<rect x="1046.1" y="164.7" width="0.8" height="8.3" fill="#1a0b0d" opacity="0.55"/>
<rect x="1049.25" y="164.7" width="0.8" height="8.3" fill="#1a0b0d" opacity="0.55"/>
<rect x="771.5" y="166.2" width="7" height="7" fill="#401c20"/>
<rect x="781.3" y="166.8" width="1.5" height="1.5" fill="#401c20"/>
<rect x="781.3" y="170.4" width="1.5" height="1.5" fill="#401c20"/>
<rect x="784.9" y="166.8" width="1.5" height="1.5" fill="#401c20"/>
<rect x="784.9" y="170.4" width="1.5" height="1.5" fill="#401c20"/>
<rect x="783" y="168.5" width="1.7" height="1.7" fill="#401c20"/>
<line x1="775" y1="166.2" x2="775" y2="173.2" stroke="#d55d6b" stroke-width="0.9"/>
<line x1="771.5" y1="169.7" x2="778.5" y2="169.7" stroke="#d55d6b" stroke-width="0.9"/>
<text x="789.7" y="172.3" font-family='"Liberation Sans", sans-serif' font-size="9" fill="#401c20" textLength="10.2" lengthAdjust="spacingAndGlyphs" stroke="#401c20" stroke-width="0.25">G4</text>
<rect x="1133" y="162.1" width="61.6" height="13.8" fill="#512329"/>
<rect x="1134" y="163.1" width="60.6" height="11.8" fill="#d55d6b"/>
<rect x="1136.4" y="166.8" width="1.5" height="1.5" fill="#401c20"/>
<rect x="1136.4" y="170.4" width="1.5" height="1.5" fill="#401c20"/>
<rect x="1140" y="166.8" width="1.5" height="1.5" fill="#401c20"/>
<rect x="1140" y="170.4" width="1.5" height="1.5" fill="#401c20"/>
<text x="1144.3" y="172.3" font-family='"Liberation Sans", sans-serif' font-size="9" fill="#401c20" textLength="10.2" lengthAdjust="spacingAndGlyphs" stroke="#401c20" stroke-width="0.25">G4</text>
<rect x="1035.7" y="187.9" width="98.9" height="13.8" fill="#3f263f"/>
<rect x="1036.7" y="188.9" width="96.9" height="11.8" fill="#a665a6"/>
<rect x="1039.1" y="192.6" width="1.5" height="1.5" fill="#321e32"/>
<rect x="1039.1" y="196.2" width="1.5" height="1.5" fill="#321e32"/>
<rect x="1042.7" y="192.6" width="1.5" height="1.5" fill="#321e32"/>
<rect x="1042.7" y="196.2" width="1.5" height="1.5" fill="#321e32"/>
<text x="1047" y="198.1" font-family='"Liberation Sans", sans-serif' font-size="9" fill="#321e32" textLength="8.7" lengthAdjust="spacingAndGlyphs" stroke="#321e32" stroke-width="0.25">F4</text>
<rect x="118" y="200.8" width="173.5" height="13.8" fill="#4a4a20"/>
<rect x="119" y="201.8" width="171.5" height="11.8" fill="#c4c455"/>
<rect x="265.7" y="203.4" width="1.5" height="8.3" fill="#18180a" opacity="0.9"/>
<rect x="269.25" y="203.4" width="0.8" height="8.3" fill="#18180a" opacity="0.55"/>
<rect x="272.4" y="203.4" width="0.8" height="8.3" fill="#18180a" opacity="0.55"/>
<rect x="275.55" y="203.4" width="0.8" height="8.3" fill="#18180a" opacity="0.55"/>
<rect x="278.3" y="203.4" width="1.5" height="8.3" fill="#18180a" opacity="0.9"/>
<rect x="281.85" y="203.4" width="0.8" height="8.3" fill="#18180a" opacity="0.55"/>
<rect x="285" y="203.4" width="0.8" height="8.3" fill="#18180a" opacity="0.55"/>
<rect x="288.15" y="203.4" width="0.8" height="8.3" fill="#18180a" opacity="0.55"/>
<rect x="500.8" y="200.8" width="242.8" height="13.8" fill="#52521e"/>
<rect x="501.8" y="201.8" width="240.8" height="11.8" fill="#d9d750"/>
<rect x="717.8" y="203.4" width="1.5" height="8.3" fill="#1a1a0a" opacity="0.9"/>
<rect x="721.35" y="203.4" width="0.8" height="8.3" fill="#1a1a0a" opacity="0.55"/>
<rect x="724.5" y="203.4" width="0.8" height="8.3" fill="#1a1a0a" opacity="0.55"/>
<rect x="727.65" y="203.4" width="0.8" height="8.3" fill="#1a1a0a" opacity="0.55"/>
<rect x="730.4" y="203.4" width="1.5" height="8.3" fill="#1a1a0a" opacity="0.9"/>
<rect x="733.95" y="203.4" width="0.8" height="8.3" fill="#1a1a0a" opacity="0.55"/>
<rect x="737.1" y="203.4" width="0.8" height="8.3" fill="#1a1a0a" opacity="0.55"/>
<rect x="740.25" y="203.4" width="0.8" height="8.3" fill="#1a1a0a" opacity="0.55"/>
<rect x="504" y="204.8" width="6.9" height="6.9" fill="#414018"/>
<path d="M505.1 207.2 L509.3 205.8 V210.7 L505.1 209.3 Z" fill="#d9d750"/>
<rect x="513.8" y="205.5" width="1.5" height="1.5" fill="#414018"/>
<rect x="513.8" y="209.1" width="1.5" height="1.5" fill="#414018"/>
<rect x="517.4" y="205.5" width="1.5" height="1.5" fill="#414018"/>
<rect x="517.4" y="209.1" width="1.5" height="1.5" fill="#414018"/>
<rect x="515.5" y="207.2" width="1.7" height="1.7" fill="#414018"/>
<text x="522.1" y="211" font-family='"Liberation Sans", sans-serif' font-size="9" fill="#414018" textLength="8.8" lengthAdjust="spacingAndGlyphs" stroke="#414018" stroke-width="0.25">E4</text>
<rect x="889.8" y="213.7" width="304.8" height="13.8" fill="#293339"/>
<rect x="890.8" y="214.7" width="303.8" height="11.8" fill="url(#g3)"/>
<line x1="923.5" y1="214.7" x2="923.5" y2="226.5" stroke="#000000" stroke-width="1" opacity="0.2"/>
<line x1="931.8" y1="214.7" x2="931.8" y2="226.5" stroke="#000000" stroke-width="1" opacity="0.2"/>
<line x1="940.1" y1="214.7" x2="940.1" y2="226.5" stroke="#000000" stroke-width="1" opacity="0.2"/>
<line x1="948.4" y1="214.7" x2="948.4" y2="226.5" stroke="#000000" stroke-width="1" opacity="0.2"/>
<line x1="956.7" y1="214.7" x2="956.7" y2="226.5" stroke="#000000" stroke-width="1" opacity="0.2"/>
<line x1="965" y1="214.7" x2="965" y2="226.5" stroke="#000000" stroke-width="1" opacity="0.2"/>
<line x1="973.3" y1="214.7" x2="973.3" y2="226.5" stroke="#000000" stroke-width="1" opacity="0.2"/>
<line x1="981.6" y1="214.7" x2="981.6" y2="226.5" stroke="#000000" stroke-width="1" opacity="0.2"/>
<line x1="989.9" y1="214.7" x2="989.9" y2="226.5" stroke="#000000" stroke-width="1" opacity="0.2"/>
<line x1="998.2" y1="214.7" x2="998.2" y2="226.5" stroke="#000000" stroke-width="1" opacity="0.2"/>
<line x1="1006.5" y1="214.7" x2="1006.5" y2="226.5" stroke="#000000" stroke-width="1" opacity="0.2"/>
<line x1="1014.8" y1="214.7" x2="1014.8" y2="226.5" stroke="#000000" stroke-width="1" opacity="0.2"/>
<line x1="1023.1" y1="214.7" x2="1023.1" y2="226.5" stroke="#000000" stroke-width="1" opacity="0.2"/>
<line x1="1031.4" y1="214.7" x2="1031.4" y2="226.5" stroke="#000000" stroke-width="1" opacity="0.2"/>
<line x1="1039.7" y1="214.7" x2="1039.7" y2="226.5" stroke="#000000" stroke-width="1" opacity="0.2"/>
<line x1="1048" y1="214.7" x2="1048" y2="226.5" stroke="#000000" stroke-width="1" opacity="0.2"/>
<line x1="1056.3" y1="214.7" x2="1056.3" y2="226.5" stroke="#000000" stroke-width="1" opacity="0.2"/>
<line x1="1064.6" y1="214.7" x2="1064.6" y2="226.5" stroke="#000000" stroke-width="1" opacity="0.2"/>
<line x1="1072.9" y1="214.7" x2="1072.9" y2="226.5" stroke="#000000" stroke-width="1" opacity="0.2"/>
<line x1="1081.2" y1="214.7" x2="1081.2" y2="226.5" stroke="#000000" stroke-width="1" opacity="0.2"/>
<line x1="1089.5" y1="214.7" x2="1089.5" y2="226.5" stroke="#000000" stroke-width="1" opacity="0.2"/>
<line x1="1097.8" y1="214.7" x2="1097.8" y2="226.5" stroke="#000000" stroke-width="1" opacity="0.2"/>
<line x1="1106.1" y1="214.7" x2="1106.1" y2="226.5" stroke="#000000" stroke-width="1" opacity="0.2"/>
<line x1="1114.4" y1="214.7" x2="1114.4" y2="226.5" stroke="#000000" stroke-width="1" opacity="0.2"/>
<line x1="1122.7" y1="214.7" x2="1122.7" y2="226.5" stroke="#000000" stroke-width="1" opacity="0.2"/>
<line x1="1131" y1="214.7" x2="1131" y2="226.5" stroke="#000000" stroke-width="1" opacity="0.2"/>
<line x1="1139.3" y1="214.7" x2="1139.3" y2="226.5" stroke="#000000" stroke-width="1" opacity="0.2"/>
<line x1="1147.6" y1="214.7" x2="1147.6" y2="226.5" stroke="#000000" stroke-width="1" opacity="0.2"/>
<line x1="1155.9" y1="214.7" x2="1155.9" y2="226.5" stroke="#000000" stroke-width="1" opacity="0.2"/>
<line x1="1164.2" y1="214.7" x2="1164.2" y2="226.5" stroke="#000000" stroke-width="1" opacity="0.2"/>
<line x1="1172.5" y1="214.7" x2="1172.5" y2="226.5" stroke="#000000" stroke-width="1" opacity="0.2"/>
<line x1="1180.8" y1="214.7" x2="1180.8" y2="226.5" stroke="#000000" stroke-width="1" opacity="0.2"/>
<line x1="1189.1" y1="214.7" x2="1189.1" y2="226.5" stroke="#000000" stroke-width="1" opacity="0.2"/>
<rect x="893.2" y="218.4" width="1.5" height="1.5" fill="#20282d"/>
<rect x="893.2" y="222" width="1.5" height="1.5" fill="#20282d"/>
<rect x="896.8" y="218.4" width="1.5" height="1.5" fill="#20282d"/>
<rect x="896.8" y="222" width="1.5" height="1.5" fill="#20282d"/>
<rect x="894.9" y="220.1" width="1.7" height="1.7" fill="#20282d"/>
<text x="901.1" y="223.9" font-family='"Liberation Sans", sans-serif' font-size="9" fill="#20282d" textLength="15.2" lengthAdjust="spacingAndGlyphs" stroke="#20282d" stroke-width="0.25">D#4</text>
<rect x="118" y="252.4" width="235.2" height="13.8" fill="#4a1f37"/>
<rect x="119" y="253.4" width="233.2" height="11.8" fill="#c45190"/>
<rect x="327.4" y="255" width="1.5" height="8.3" fill="#180a11" opacity="0.9"/>
<rect x="330.95" y="255" width="0.8" height="8.3" fill="#180a11" opacity="0.55"/>
<rect x="334.1" y="255" width="0.8" height="8.3" fill="#180a11" opacity="0.55"/>
<rect x="337.25" y="255" width="0.8" height="8.3" fill="#180a11" opacity="0.55"/>
<rect x="340" y="255" width="1.5" height="8.3" fill="#180a11" opacity="0.9"/>
<rect x="343.55" y="255" width="0.8" height="8.3" fill="#180a11" opacity="0.55"/>
<rect x="346.7" y="255" width="0.8" height="8.3" fill="#180a11" opacity="0.55"/>
<rect x="349.85" y="255" width="0.8" height="8.3" fill="#180a11" opacity="0.55"/>
<rect x="452.1" y="265.3" width="486.5" height="13.8" fill="#4c521f"/>
<rect x="453.1" y="266.3" width="484.5" height="11.8" fill="url(#g4)"/>
<line x1="480.2" y1="266.3" x2="480.2" y2="278.1" stroke="#000000" stroke-width="1" opacity="0.2"/>
<line x1="507" y1="266.3" x2="507" y2="278.1" stroke="#000000" stroke-width="1" opacity="0.2"/>
<line x1="532.6" y1="266.3" x2="532.6" y2="278.1" stroke="#000000" stroke-width="1" opacity="0.2"/>
<line x1="557" y1="266.3" x2="557" y2="278.1" stroke="#000000" stroke-width="1" opacity="0.2"/>
<line x1="580" y1="266.3" x2="580" y2="278.1" stroke="#000000" stroke-width="1" opacity="0.2"/>
<line x1="602.4" y1="266.3" x2="602.4" y2="278.1" stroke="#000000" stroke-width="1" opacity="0.2"/>
<line x1="623.3" y1="266.3" x2="623.3" y2="278.1" stroke="#000000" stroke-width="1" opacity="0.2"/>
<line x1="643.6" y1="266.3" x2="643.6" y2="278.1" stroke="#000000" stroke-width="1" opacity="0.2"/>
<line x1="662.7" y1="266.3" x2="662.7" y2="278.1" stroke="#000000" stroke-width="1" opacity="0.2"/>
<line x1="681" y1="266.3" x2="681" y2="278.1" stroke="#000000" stroke-width="1" opacity="0.2"/>
<line x1="698.2" y1="266.3" x2="698.2" y2="278.1" stroke="#000000" stroke-width="1" opacity="0.2"/>
<line x1="714.9" y1="266.3" x2="714.9" y2="278.1" stroke="#000000" stroke-width="1" opacity="0.2"/>
<line x1="730.6" y1="266.3" x2="730.6" y2="278.1" stroke="#000000" stroke-width="1" opacity="0.2"/>
<line x1="745.3" y1="266.3" x2="745.3" y2="278.1" stroke="#000000" stroke-width="1" opacity="0.2"/>
<line x1="759.7" y1="266.3" x2="759.7" y2="278.1" stroke="#000000" stroke-width="1" opacity="0.2"/>
<line x1="773" y1="266.3" x2="773" y2="278.1" stroke="#000000" stroke-width="1" opacity="0.2"/>
<line x1="785.3" y1="266.3" x2="785.3" y2="278.1" stroke="#000000" stroke-width="1" opacity="0.2"/>
<line x1="797.3" y1="266.3" x2="797.3" y2="278.1" stroke="#000000" stroke-width="1" opacity="0.2"/>
<line x1="808.6" y1="266.3" x2="808.6" y2="278.1" stroke="#000000" stroke-width="1" opacity="0.2"/>
<line x1="819.4" y1="266.3" x2="819.4" y2="278.1" stroke="#000000" stroke-width="1" opacity="0.2"/>
<line x1="829.5" y1="266.3" x2="829.5" y2="278.1" stroke="#000000" stroke-width="1" opacity="0.2"/>
<line x1="839" y1="266.3" x2="839" y2="278.1" stroke="#000000" stroke-width="1" opacity="0.2"/>
<line x1="847.5" y1="266.3" x2="847.5" y2="278.1" stroke="#000000" stroke-width="1" opacity="0.2"/>
<line x1="856" y1="266.3" x2="856" y2="278.1" stroke="#000000" stroke-width="1" opacity="0.2"/>
<line x1="864" y1="266.3" x2="864" y2="278.1" stroke="#000000" stroke-width="1" opacity="0.2"/>
<line x1="871.6" y1="266.3" x2="871.6" y2="278.1" stroke="#000000" stroke-width="1" opacity="0.2"/>
<line x1="878.6" y1="266.3" x2="878.6" y2="278.1" stroke="#000000" stroke-width="1" opacity="0.2"/>
<line x1="885" y1="266.3" x2="885" y2="278.1" stroke="#000000" stroke-width="1" opacity="0.2"/>
<line x1="891" y1="266.3" x2="891" y2="278.1" stroke="#000000" stroke-width="1" opacity="0.2"/>
<line x1="897" y1="266.3" x2="897" y2="278.1" stroke="#000000" stroke-width="1" opacity="0.2"/>
<line x1="902.2" y1="266.3" x2="902.2" y2="278.1" stroke="#000000" stroke-width="1" opacity="0.2"/>
<line x1="907" y1="266.3" x2="907" y2="278.1" stroke="#000000" stroke-width="1" opacity="0.2"/>
<line x1="911.9" y1="266.3" x2="911.9" y2="278.1" stroke="#000000" stroke-width="1" opacity="0.2"/>
<line x1="916" y1="266.3" x2="916" y2="278.1" stroke="#000000" stroke-width="1" opacity="0.2"/>
<line x1="920.2" y1="266.3" x2="920.2" y2="278.1" stroke="#000000" stroke-width="1" opacity="0.2"/>
<line x1="924" y1="266.3" x2="924" y2="278.1" stroke="#000000" stroke-width="1" opacity="0.2"/>
<line x1="927.4" y1="266.3" x2="927.4" y2="278.1" stroke="#000000" stroke-width="1" opacity="0.2"/>
<line x1="930.3" y1="266.3" x2="930.3" y2="278.1" stroke="#000000" stroke-width="1" opacity="0.2"/>
<line x1="933" y1="266.3" x2="933" y2="278.1" stroke="#000000" stroke-width="1" opacity="0.2"/>
<line x1="935.7" y1="266.3" x2="935.7" y2="278.1" stroke="#000000" stroke-width="1" opacity="0.2"/>
<line x1="456.1" y1="270.4" x2="460.1" y2="274.4" stroke="#3c4119" stroke-width="1"/>
<rect x="455.5" y="269.8" width="1.5" height="1.5" fill="#3c4119"/>
<rect x="459.2" y="273.5" width="1.6" height="1.6" fill="#3c4119"/>
<text x="463.4" y="275.5" font-family='"Liberation Sans", sans-serif' font-size="9" fill="#3c4119" textLength="9.7" lengthAdjust="spacingAndGlyphs" stroke="#3c4119" stroke-width="0.25">B3</text>
<rect x="841.2" y="291.1" width="294" height="13.8" fill="#f0ae55"/>
<rect x="842.2" y="292.1" width="292" height="11.8" fill="#92683a"/>
<line x1="845.2" y1="296.2" x2="849.2" y2="300.2" stroke="#f3cf8f" stroke-width="1"/>
<rect x="844.6" y="295.6" width="1.5" height="1.5" fill="#f3cf8f"/>
<rect x="848.3" y="299.3" width="1.6" height="1.6" fill="#f3cf8f"/>
<text x="852.5" y="301.3" font-family='"Liberation Sans", sans-serif' font-size="9" fill="#f3cf8f" textLength="10" lengthAdjust="spacingAndGlyphs" stroke="#f3cf8f" stroke-width="0.25">A3</text>
<rect x="118" y="316.9" width="236.2" height="13.8" fill="#472529"/>
<rect x="119" y="317.9" width="234.2" height="11.8" fill="#ba616b"/>
<rect x="328.4" y="319.5" width="1.5" height="8.3" fill="#160c0d" opacity="0.9"/>
<rect x="331.95" y="319.5" width="0.8" height="8.3" fill="#160c0d" opacity="0.55"/>
<rect x="335.1" y="319.5" width="0.8" height="8.3" fill="#160c0d" opacity="0.55"/>
<rect x="338.25" y="319.5" width="0.8" height="8.3" fill="#160c0d" opacity="0.55"/>
<rect x="341" y="319.5" width="1.5" height="8.3" fill="#160c0d" opacity="0.9"/>
<rect x="344.55" y="319.5" width="0.8" height="8.3" fill="#160c0d" opacity="0.55"/>
<rect x="347.7" y="319.5" width="0.8" height="8.3" fill="#160c0d" opacity="0.55"/>
<rect x="350.85" y="319.5" width="0.8" height="8.3" fill="#160c0d" opacity="0.55"/>
<rect x="233" y="342.7" width="338.2" height="13.8" fill="#3f263c"/>
<rect x="234" y="343.7" width="336.2" height="11.8" fill="#a5639f"/>
<rect x="545.4" y="345.3" width="1.5" height="8.3" fill="#140c13" opacity="0.9"/>
<rect x="548.95" y="345.3" width="0.8" height="8.3" fill="#140c13" opacity="0.55"/>
<rect x="552.1" y="345.3" width="0.8" height="8.3" fill="#140c13" opacity="0.55"/>
<rect x="555.25" y="345.3" width="0.8" height="8.3" fill="#140c13" opacity="0.55"/>
<rect x="558" y="345.3" width="1.5" height="8.3" fill="#140c13" opacity="0.9"/>
<rect x="561.55" y="345.3" width="0.8" height="8.3" fill="#140c13" opacity="0.55"/>
<rect x="564.7" y="345.3" width="0.8" height="8.3" fill="#140c13" opacity="0.55"/>
<rect x="567.85" y="345.3" width="0.8" height="8.3" fill="#140c13" opacity="0.55"/>
<rect x="236.2" y="346.7" width="6.9" height="6.9" fill="#321e30"/>
<path d="M237.3 349.1 L241.5 347.7 V352.6 L237.3 351.2 Z" fill="#a5639f"/>
<rect x="246" y="347.4" width="1.5" height="1.5" fill="#321e30"/>
<rect x="246" y="351" width="1.5" height="1.5" fill="#321e30"/>
<rect x="249.6" y="347.4" width="1.5" height="1.5" fill="#321e30"/>
<rect x="249.6" y="351" width="1.5" height="1.5" fill="#321e30"/>
<rect x="247.7" y="349.1" width="1.7" height="1.7" fill="#321e30"/>
<text x="254.3" y="352.9" font-family='"Liberation Sans", sans-serif' font-size="9" fill="#321e30" textLength="8.7" lengthAdjust="spacingAndGlyphs" stroke="#321e30" stroke-width="0.25">F3</text>
<rect x="792.6" y="368.5" width="389.7" height="13.8" fill="#1c3c50"/>
<rect x="793.6" y="369.5" width="387.7" height="11.8" fill="url(#g5)"/>
<line x1="823.4" y1="369.5" x2="823.4" y2="381.3" stroke="#000000" stroke-width="1" opacity="0.2"/>
<line x1="836.7" y1="369.5" x2="836.7" y2="381.3" stroke="#000000" stroke-width="1" opacity="0.2"/>
<line x1="854" y1="369.5" x2="854" y2="381.3" stroke="#000000" stroke-width="1" opacity="0.2"/>
<line x1="874.5" y1="369.5" x2="874.5" y2="381.3" stroke="#000000" stroke-width="1" opacity="0.2"/>
<line x1="899.3" y1="369.5" x2="899.3" y2="381.3" stroke="#000000" stroke-width="1" opacity="0.2"/>
<line x1="929.4" y1="369.5" x2="929.4" y2="381.3" stroke="#000000" stroke-width="1" opacity="0.2"/>
<line x1="965" y1="369.5" x2="965" y2="381.3" stroke="#000000" stroke-width="1" opacity="0.2"/>
<line x1="1007.3" y1="369.5" x2="1007.3" y2="381.3" stroke="#000000" stroke-width="1" opacity="0.2"/>
<line x1="1057" y1="369.5" x2="1057" y2="381.3" stroke="#000000" stroke-width="1" opacity="0.2"/>
<line x1="1115" y1="369.5" x2="1115" y2="381.3" stroke="#000000" stroke-width="1" opacity="0.2"/>
<rect x="1156.5" y="371.1" width="1.5" height="8.3" fill="#091319" opacity="0.9"/>
<rect x="1160.05" y="371.1" width="0.8" height="8.3" fill="#091319" opacity="0.55"/>
<rect x="1163.2" y="371.1" width="0.8" height="8.3" fill="#091319" opacity="0.55"/>
<rect x="1166.35" y="371.1" width="0.8" height="8.3" fill="#091319" opacity="0.55"/>
<rect x="1169.1" y="371.1" width="1.5" height="8.3" fill="#091319" opacity="0.9"/>
<rect x="1172.65" y="371.1" width="0.8" height="8.3" fill="#091319" opacity="0.55"/>
<rect x="1175.8" y="371.1" width="0.8" height="8.3" fill="#091319" opacity="0.55"/>
<rect x="1178.95" y="371.1" width="0.8" height="8.3" fill="#091319" opacity="0.55"/>
<rect x="795.8" y="372.6" width="7" height="7" fill="#162f3f"/>
<rect x="805.6" y="373.2" width="1.5" height="1.5" fill="#162f3f"/>
<rect x="805.6" y="376.8" width="1.5" height="1.5" fill="#162f3f"/>
<rect x="809.2" y="373.2" width="1.5" height="1.5" fill="#162f3f"/>
<rect x="809.2" y="376.8" width="1.5" height="1.5" fill="#162f3f"/>
<rect x="807.3" y="374.9" width="1.7" height="1.7" fill="#162f3f"/>
<line x1="799.3" y1="372.6" x2="799.3" y2="379.6" stroke="#4b9ed3" stroke-width="0.9"/>
<line x1="795.8" y1="376.1" x2="802.8" y2="376.1" stroke="#4b9ed3" stroke-width="0.9"/>
<text x="814" y="378.7" font-family='"Liberation Sans", sans-serif' font-size="9" fill="#162f3f" textLength="15.2" lengthAdjust="spacingAndGlyphs" stroke="#162f3f" stroke-width="0.25">D#3</text>
<rect x="1182.3" y="381.4" width="12.3" height="13.8" fill="#4f3126"/>
<rect x="1183.3" y="382.4" width="11.3" height="11.8" fill="#d18165"/>
<rect x="1185.7" y="385.5" width="7" height="7" fill="#3f271e"/>
<line x1="1189.2" y1="385.5" x2="1189.2" y2="392.5" stroke="#d18165" stroke-width="0.9"/>
<line x1="1185.7" y1="389" x2="1192.7" y2="389" stroke="#d18165" stroke-width="0.9"/>
<rect x="118" y="420.1" width="213.2" height="13.8" fill="#474f1e"/>
<rect x="119" y="421.1" width="211.2" height="11.8" fill="url(#g6)"/>
<line x1="143" y1="421.1" x2="143" y2="432.9" stroke="#000000" stroke-width="1" opacity="0.2"/>
<line x1="173" y1="421.1" x2="173" y2="432.9" stroke="#000000" stroke-width="1" opacity="0.2"/>
<line x1="206" y1="421.1" x2="206" y2="432.9" stroke="#000000" stroke-width="1" opacity="0.2"/>
<line x1="243.3" y1="421.1" x2="243.3" y2="432.9" stroke="#000000" stroke-width="1" opacity="0.2"/>
<line x1="284.8" y1="421.1" x2="284.8" y2="432.9" stroke="#000000" stroke-width="1" opacity="0.2"/>
<rect x="354.9" y="471.7" width="388.7" height="13.8" fill="#43272b"/>
<rect x="355.9" y="472.7" width="386.7" height="11.8" fill="url(#g7)"/>
<line x1="385.7" y1="472.7" x2="385.7" y2="484.5" stroke="#000000" stroke-width="1" opacity="0.2"/>
<line x1="401" y1="472.7" x2="401" y2="484.5" stroke="#000000" stroke-width="1" opacity="0.2"/>
<line x1="422" y1="472.7" x2="422" y2="484.5" stroke="#000000" stroke-width="1" opacity="0.2"/>
<line x1="450.3" y1="472.7" x2="450.3" y2="484.5" stroke="#000000" stroke-width="1" opacity="0.2"/>
<line x1="485.8" y1="472.7" x2="485.8" y2="484.5" stroke="#000000" stroke-width="1" opacity="0.2"/>
<line x1="531.5" y1="472.7" x2="531.5" y2="484.5" stroke="#000000" stroke-width="1" opacity="0.2"/>
<line x1="588.2" y1="472.7" x2="588.2" y2="484.5" stroke="#000000" stroke-width="1" opacity="0.2"/>
<line x1="658.6" y1="472.7" x2="658.6" y2="484.5" stroke="#000000" stroke-width="1" opacity="0.2"/>
<rect x="358.3" y="475.6" width="1.4" height="1.4" fill="#351f22"/>
<rect x="358.3" y="478.4" width="1.4" height="1.4" fill="#351f22"/>
<rect x="358.3" y="481.2" width="1.4" height="1.4" fill="#351f22"/>
<rect x="361.7" y="475.6" width="1.4" height="1.4" fill="#351f22"/>
<rect x="361.7" y="478.4" width="1.4" height="1.4" fill="#351f22"/>
<rect x="361.7" y="481.2" width="1.4" height="1.4" fill="#351f22"/>
<text x="366.2" y="481.9" font-family='"Liberation Sans", sans-serif' font-size="9" fill="#351f22" textLength="10.2" lengthAdjust="spacingAndGlyphs" stroke="#351f22" stroke-width="0.25">G2</text>
<rect x="744.2" y="497.5" width="388.8" height="13.8" fill="#3f263d"/>
<rect x="745.2" y="498.5" width="386.8" height="11.8" fill="#a665a1"/>
<rect x="747.8" y="501.6" width="1.6" height="1.6" fill="#321e30"/>
<rect x="751.2" y="505" width="1.6" height="1.6" fill="#321e30"/>
<text x="755.8" y="507.7" font-family='"Liberation Sans", sans-serif' font-size="9" fill="#321e30" textLength="8.7" lengthAdjust="spacingAndGlyphs" stroke="#321e30" stroke-width="0.25">F2</text>
<rect x="1133" y="510.4" width="61.6" height="13.8" fill="#4c491f"/>
<rect x="1134" y="511.4" width="60.6" height="11.8" fill="#c8c152"/>
<rect x="1136.4" y="515.1" width="1.5" height="1.5" fill="#3c3a19"/>
<rect x="1136.4" y="518.7" width="1.5" height="1.5" fill="#3c3a19"/>
<rect x="1140" y="515.1" width="1.5" height="1.5" fill="#3c3a19"/>
<rect x="1140" y="518.7" width="1.5" height="1.5" fill="#3c3a19"/>
<text x="1144.3" y="520.6" font-family='"Liberation Sans", sans-serif' font-size="9" fill="#3c3a19" textLength="8.8" lengthAdjust="spacingAndGlyphs" stroke="#3c3a19" stroke-width="0.25">E2</text>
</g>
<clipPath id="kclip"><rect x="27" y="103" width="92" height="440.3"/></clipPath>
<g clip-path="url(#kclip)">
<rect x="27" y="103.9" width="45.6" height="439.4" fill="#2e2e2e"/>
<rect x="72.6" y="103.9" width="45.4" height="439.4" fill="#b6b6b6"/>
<line x1="72.6" y1="-24.65" x2="118" y2="-24.65" stroke="#6f6f6f" stroke-width="1"/>
<line x1="72.6" y1="1.15" x2="118" y2="1.15" stroke="#6f6f6f" stroke-width="1"/>
<line x1="72.6" y1="26.95" x2="118" y2="26.95" stroke="#6f6f6f" stroke-width="1"/>
<line x1="72.6" y1="46.3" x2="118" y2="46.3" stroke="#6f6f6f" stroke-width="1"/>
<line x1="72.6" y1="65.65" x2="118" y2="65.65" stroke="#6f6f6f" stroke-width="1"/>
<line x1="72.6" y1="91.45" x2="118" y2="91.45" stroke="#6f6f6f" stroke-width="1"/>
<line x1="72.6" y1="110.8" x2="118" y2="110.8" stroke="#6f6f6f" stroke-width="1"/>
<line x1="72.6" y1="130.15" x2="118" y2="130.15" stroke="#6f6f6f" stroke-width="1"/>
<rect x="72.6" y="130.15" width="45.4" height="25.8" fill="#eeeeee"/>
<line x1="72.6" y1="155.95" x2="118" y2="155.95" stroke="#6f6f6f" stroke-width="1"/>
<line x1="72.6" y1="181.75" x2="118" y2="181.75" stroke="#6f6f6f" stroke-width="1"/>
<line x1="72.6" y1="201.1" x2="118" y2="201.1" stroke="#6f6f6f" stroke-width="1"/>
<line x1="72.6" y1="220.45" x2="118" y2="220.45" stroke="#6f6f6f" stroke-width="1"/>
<rect x="72.6" y="220.45" width="45.4" height="25.8" fill="#eeeeee"/>
<line x1="72.6" y1="246.25" x2="118" y2="246.25" stroke="#6f6f6f" stroke-width="1"/>
<line x1="72.6" y1="265.6" x2="118" y2="265.6" stroke="#6f6f6f" stroke-width="1"/>
<line x1="72.6" y1="284.95" x2="118" y2="284.95" stroke="#6f6f6f" stroke-width="1"/>
<rect x="72.6" y="284.95" width="45.4" height="25.8" fill="#eeeeee"/>
<line x1="72.6" y1="310.75" x2="118" y2="310.75" stroke="#6f6f6f" stroke-width="1"/>
<line x1="72.6" y1="336.55" x2="118" y2="336.55" stroke="#6f6f6f" stroke-width="1"/>
<line x1="72.6" y1="355.9" x2="118" y2="355.9" stroke="#6f6f6f" stroke-width="1"/>
<line x1="72.6" y1="375.25" x2="118" y2="375.25" stroke="#6f6f6f" stroke-width="1"/>
<rect x="72.6" y="375.25" width="45.4" height="25.8" fill="#eeeeee"/>
<line x1="72.6" y1="401.05" x2="118" y2="401.05" stroke="#6f6f6f" stroke-width="1"/>
<line x1="72.6" y1="420.4" x2="118" y2="420.4" stroke="#6f6f6f" stroke-width="1"/>
<line x1="72.6" y1="439.75" x2="118" y2="439.75" stroke="#6f6f6f" stroke-width="1"/>
<line x1="72.6" y1="465.55" x2="118" y2="465.55" stroke="#6f6f6f" stroke-width="1"/>
<line x1="72.6" y1="491.35" x2="118" y2="491.35" stroke="#6f6f6f" stroke-width="1"/>
<line x1="72.6" y1="510.7" x2="118" y2="510.7" stroke="#6f6f6f" stroke-width="1"/>
<line x1="72.6" y1="530.05" x2="118" y2="530.05" stroke="#6f6f6f" stroke-width="1"/>
<line x1="72.6" y1="555.85" x2="118" y2="555.85" stroke="#6f6f6f" stroke-width="1"/>
<line x1="72.6" y1="575.2" x2="118" y2="575.2" stroke="#6f6f6f" stroke-width="1"/>
<line x1="27" y1="97.9" x2="72.6" y2="97.9" stroke="#393939" stroke-width="1"/>
<text x="69.6" y="107.2" font-family='"Liberation Sans", sans-serif' font-size="9.4" fill="#ffffff" font-weight="bold" text-anchor="end" textLength="11.2" lengthAdjust="spacingAndGlyphs">C5</text>
<line x1="27" y1="110.8" x2="72.6" y2="110.8" stroke="#393939" stroke-width="1"/>
<line x1="27" y1="110.8" x2="72.6" y2="110.8" stroke="#5c5c5c" stroke-width="1"/>
<text x="69.6" y="120" font-family='"Liberation Sans", sans-serif' font-size="9.2" fill="#a3a3a3" text-anchor="end" textLength="10.4" lengthAdjust="spacingAndGlyphs" stroke="#a3a3a3" stroke-width="0.25">B4</text>
<rect x="72.6" y="123.4" width="31.8" height="12.5" fill="#161616"/>
<rect x="72.6" y="124.2" width="31.4" height="10.7" fill="url(#g8)"/>
<line x1="27" y1="123.7" x2="72.6" y2="123.7" stroke="#393939" stroke-width="1"/>
<text x="69.6" y="132.9" font-family='"Liberation Sans", sans-serif' font-size="9.2" fill="#a3a3a3" text-anchor="end" textLength="15.8" lengthAdjust="spacingAndGlyphs" stroke="#a3a3a3" stroke-width="0.25">A#4</text>
<line x1="27" y1="136.6" x2="72.6" y2="136.6" stroke="#393939" stroke-width="1"/>
<text x="69.6" y="145.8" font-family='"Liberation Sans", sans-serif' font-size="9.2" fill="#a3a3a3" text-anchor="end" textLength="10.4" lengthAdjust="spacingAndGlyphs" stroke="#a3a3a3" stroke-width="0.25">A4</text>
<rect x="72.6" y="149.2" width="31.8" height="12.5" fill="#161616"/>
<rect x="72.6" y="150" width="31.4" height="10.7" fill="url(#g8)"/>
<line x1="27" y1="149.5" x2="72.6" y2="149.5" stroke="#393939" stroke-width="1"/>
<text x="69.6" y="158.7" font-family='"Liberation Sans", sans-serif' font-size="9.2" fill="#a3a3a3" text-anchor="end" textLength="15.8" lengthAdjust="spacingAndGlyphs" stroke="#a3a3a3" stroke-width="0.25">G#4</text>
<line x1="27" y1="162.4" x2="72.6" y2="162.4" stroke="#393939" stroke-width="1"/>
<text x="69.6" y="171.6" font-family='"Liberation Sans", sans-serif' font-size="9.2" fill="#a3a3a3" text-anchor="end" textLength="10.4" lengthAdjust="spacingAndGlyphs" stroke="#a3a3a3" stroke-width="0.25">G4</text>
<rect x="72.6" y="175" width="31.8" height="12.5" fill="#161616"/>
<rect x="72.6" y="175.8" width="31.4" height="10.7" fill="url(#g8)"/>
<line x1="27" y1="175.3" x2="72.6" y2="175.3" stroke="#393939" stroke-width="1"/>
<text x="69.6" y="184.5" font-family='"Liberation Sans", sans-serif' font-size="9.2" fill="#a3a3a3" text-anchor="end" textLength="15.8" lengthAdjust="spacingAndGlyphs" stroke="#a3a3a3" stroke-width="0.25">F#4</text>
<line x1="27" y1="188.2" x2="72.6" y2="188.2" stroke="#393939" stroke-width="1"/>
<text x="69.6" y="197.4" font-family='"Liberation Sans", sans-serif' font-size="9.2" fill="#a3a3a3" text-anchor="end" textLength="10.4" lengthAdjust="spacingAndGlyphs" stroke="#a3a3a3" stroke-width="0.25">F4</text>
<line x1="27" y1="201.1" x2="72.6" y2="201.1" stroke="#393939" stroke-width="1"/>
<text x="69.6" y="210.3" font-family='"Liberation Sans", sans-serif' font-size="9.2" fill="#a3a3a3" text-anchor="end" textLength="10.4" lengthAdjust="spacingAndGlyphs" stroke="#a3a3a3" stroke-width="0.25">E4</text>
<rect x="72.6" y="213.7" width="31.8" height="12.5" fill="#161616"/>
<rect x="72.6" y="214.5" width="31.4" height="10.7" fill="url(#g8)"/>
<line x1="27" y1="214" x2="72.6" y2="214" stroke="#393939" stroke-width="1"/>
<text x="69.6" y="223.2" font-family='"Liberation Sans", sans-serif' font-size="9.2" fill="#a3a3a3" text-anchor="end" textLength="15.8" lengthAdjust="spacingAndGlyphs" stroke="#a3a3a3" stroke-width="0.25">D#4</text>
<line x1="27" y1="226.9" x2="72.6" y2="226.9" stroke="#393939" stroke-width="1"/>
<text x="69.6" y="236.1" font-family='"Liberation Sans", sans-serif' font-size="9.2" fill="#a3a3a3" text-anchor="end" textLength="10.4" lengthAdjust="spacingAndGlyphs" stroke="#a3a3a3" stroke-width="0.25">D4</text>
<rect x="72.6" y="239.5" width="31.8" height="12.5" fill="#161616"/>
<rect x="72.6" y="240.3" width="31.4" height="10.7" fill="url(#g8)"/>
<line x1="27" y1="239.8" x2="72.6" y2="239.8" stroke="#393939" stroke-width="1"/>
<text x="69.6" y="249" font-family='"Liberation Sans", sans-serif' font-size="9.2" fill="#a3a3a3" text-anchor="end" textLength="15.8" lengthAdjust="spacingAndGlyphs" stroke="#a3a3a3" stroke-width="0.25">C#4</text>
<line x1="27" y1="252.7" x2="72.6" y2="252.7" stroke="#393939" stroke-width="1"/>
<text x="69.6" y="262" font-family='"Liberation Sans", sans-serif' font-size="9.4" fill="#ffffff" font-weight="bold" text-anchor="end" textLength="11.2" lengthAdjust="spacingAndGlyphs">C4</text>
<line x1="27" y1="265.6" x2="72.6" y2="265.6" stroke="#393939" stroke-width="1"/>
<line x1="27" y1="265.6" x2="72.6" y2="265.6" stroke="#5c5c5c" stroke-width="1"/>
<text x="69.6" y="274.8" font-family='"Liberation Sans", sans-serif' font-size="9.2" fill="#a3a3a3" text-anchor="end" textLength="10.4" lengthAdjust="spacingAndGlyphs" stroke="#a3a3a3" stroke-width="0.25">B3</text>
<rect x="72.6" y="278.2" width="31.8" height="12.5" fill="#161616"/>
<rect x="72.6" y="279" width="31.4" height="10.7" fill="url(#g8)"/>
<line x1="27" y1="278.5" x2="72.6" y2="278.5" stroke="#393939" stroke-width="1"/>
<text x="69.6" y="287.7" font-family='"Liberation Sans", sans-serif' font-size="9.2" fill="#a3a3a3" text-anchor="end" textLength="15.8" lengthAdjust="spacingAndGlyphs" stroke="#a3a3a3" stroke-width="0.25">A#3</text>
<line x1="27" y1="291.4" x2="72.6" y2="291.4" stroke="#393939" stroke-width="1"/>
<text x="69.6" y="300.6" font-family='"Liberation Sans", sans-serif' font-size="9.2" fill="#a3a3a3" text-anchor="end" textLength="10.4" lengthAdjust="spacingAndGlyphs" stroke="#a3a3a3" stroke-width="0.25">A3</text>
<rect x="72.6" y="304" width="31.8" height="12.5" fill="#161616"/>
<rect x="72.6" y="304.8" width="31.4" height="10.7" fill="url(#g8)"/>
<line x1="27" y1="304.3" x2="72.6" y2="304.3" stroke="#393939" stroke-width="1"/>
<text x="69.6" y="313.5" font-family='"Liberation Sans", sans-serif' font-size="9.2" fill="#a3a3a3" text-anchor="end" textLength="15.8" lengthAdjust="spacingAndGlyphs" stroke="#a3a3a3" stroke-width="0.25">G#3</text>
<line x1="27" y1="317.2" x2="72.6" y2="317.2" stroke="#393939" stroke-width="1"/>
<text x="69.6" y="326.4" font-family='"Liberation Sans", sans-serif' font-size="9.2" fill="#a3a3a3" text-anchor="end" textLength="10.4" lengthAdjust="spacingAndGlyphs" stroke="#a3a3a3" stroke-width="0.25">G3</text>
<rect x="72.6" y="329.8" width="31.8" height="12.5" fill="#161616"/>
<rect x="72.6" y="330.6" width="31.4" height="10.7" fill="url(#g8)"/>
<line x1="27" y1="330.1" x2="72.6" y2="330.1" stroke="#393939" stroke-width="1"/>
<text x="69.6" y="339.3" font-family='"Liberation Sans", sans-serif' font-size="9.2" fill="#a3a3a3" text-anchor="end" textLength="15.8" lengthAdjust="spacingAndGlyphs" stroke="#a3a3a3" stroke-width="0.25">F#3</text>
<line x1="27" y1="343" x2="72.6" y2="343" stroke="#393939" stroke-width="1"/>
<text x="69.6" y="352.2" font-family='"Liberation Sans", sans-serif' font-size="9.2" fill="#a3a3a3" text-anchor="end" textLength="10.4" lengthAdjust="spacingAndGlyphs" stroke="#a3a3a3" stroke-width="0.25">F3</text>
<line x1="27" y1="355.9" x2="72.6" y2="355.9" stroke="#393939" stroke-width="1"/>
<text x="69.6" y="365.1" font-family='"Liberation Sans", sans-serif' font-size="9.2" fill="#a3a3a3" text-anchor="end" textLength="10.4" lengthAdjust="spacingAndGlyphs" stroke="#a3a3a3" stroke-width="0.25">E3</text>
<rect x="72.6" y="368.5" width="31.8" height="12.5" fill="#161616"/>
<rect x="72.6" y="369.3" width="31.4" height="10.7" fill="url(#g8)"/>
<line x1="27" y1="368.8" x2="72.6" y2="368.8" stroke="#393939" stroke-width="1"/>
<text x="69.6" y="378" font-family='"Liberation Sans", sans-serif' font-size="9.2" fill="#a3a3a3" text-anchor="end" textLength="15.8" lengthAdjust="spacingAndGlyphs" stroke="#a3a3a3" stroke-width="0.25">D#3</text>
<line x1="27" y1="381.7" x2="72.6" y2="381.7" stroke="#393939" stroke-width="1"/>
<text x="69.6" y="390.9" font-family='"Liberation Sans", sans-serif' font-size="9.2" fill="#a3a3a3" text-anchor="end" textLength="10.4" lengthAdjust="spacingAndGlyphs" stroke="#a3a3a3" stroke-width="0.25">D3</text>
<rect x="72.6" y="394.3" width="31.8" height="12.5" fill="#161616"/>
<rect x="72.6" y="395.1" width="31.4" height="10.7" fill="url(#g8)"/>
<line x1="27" y1="394.6" x2="72.6" y2="394.6" stroke="#393939" stroke-width="1"/>
<text x="69.6" y="403.8" font-family='"Liberation Sans", sans-serif' font-size="9.2" fill="#a3a3a3" text-anchor="end" textLength="15.8" lengthAdjust="spacingAndGlyphs" stroke="#a3a3a3" stroke-width="0.25">C#3</text>
<line x1="27" y1="407.5" x2="72.6" y2="407.5" stroke="#393939" stroke-width="1"/>
<text x="69.6" y="416.8" font-family='"Liberation Sans", sans-serif' font-size="9.4" fill="#ffffff" font-weight="bold" text-anchor="end" textLength="11.2" lengthAdjust="spacingAndGlyphs">C3</text>
<line x1="27" y1="420.4" x2="72.6" y2="420.4" stroke="#393939" stroke-width="1"/>
<line x1="27" y1="420.4" x2="72.6" y2="420.4" stroke="#5c5c5c" stroke-width="1"/>
<text x="69.6" y="429.6" font-family='"Liberation Sans", sans-serif' font-size="9.2" fill="#a3a3a3" text-anchor="end" textLength="10.4" lengthAdjust="spacingAndGlyphs" stroke="#a3a3a3" stroke-width="0.25">B2</text>
<rect x="72.6" y="433" width="31.8" height="12.5" fill="#161616"/>
<rect x="72.6" y="433.8" width="31.4" height="10.7" fill="url(#g8)"/>
<line x1="27" y1="433.3" x2="72.6" y2="433.3" stroke="#393939" stroke-width="1"/>
<text x="69.6" y="442.5" font-family='"Liberation Sans", sans-serif' font-size="9.2" fill="#a3a3a3" text-anchor="end" textLength="15.8" lengthAdjust="spacingAndGlyphs" stroke="#a3a3a3" stroke-width="0.25">A#2</text>
<line x1="27" y1="446.2" x2="72.6" y2="446.2" stroke="#393939" stroke-width="1"/>
<text x="69.6" y="455.4" font-family='"Liberation Sans", sans-serif' font-size="9.2" fill="#a3a3a3" text-anchor="end" textLength="10.4" lengthAdjust="spacingAndGlyphs" stroke="#a3a3a3" stroke-width="0.25">A2</text>
<rect x="72.6" y="458.8" width="31.8" height="12.5" fill="#161616"/>
<rect x="72.6" y="459.6" width="31.4" height="10.7" fill="url(#g8)"/>
<line x1="27" y1="459.1" x2="72.6" y2="459.1" stroke="#393939" stroke-width="1"/>
<text x="69.6" y="468.3" font-family='"Liberation Sans", sans-serif' font-size="9.2" fill="#a3a3a3" text-anchor="end" textLength="15.8" lengthAdjust="spacingAndGlyphs" stroke="#a3a3a3" stroke-width="0.25">G#2</text>
<line x1="27" y1="472" x2="72.6" y2="472" stroke="#393939" stroke-width="1"/>
<text x="69.6" y="481.2" font-family='"Liberation Sans", sans-serif' font-size="9.2" fill="#a3a3a3" text-anchor="end" textLength="10.4" lengthAdjust="spacingAndGlyphs" stroke="#a3a3a3" stroke-width="0.25">G2</text>
<rect x="72.6" y="484.6" width="31.8" height="12.5" fill="#161616"/>
<rect x="72.6" y="485.4" width="31.4" height="10.7" fill="url(#g8)"/>
<line x1="27" y1="484.9" x2="72.6" y2="484.9" stroke="#393939" stroke-width="1"/>
<text x="69.6" y="494.1" font-family='"Liberation Sans", sans-serif' font-size="9.2" fill="#a3a3a3" text-anchor="end" textLength="15.8" lengthAdjust="spacingAndGlyphs" stroke="#a3a3a3" stroke-width="0.25">F#2</text>
<line x1="27" y1="497.8" x2="72.6" y2="497.8" stroke="#393939" stroke-width="1"/>
<text x="69.6" y="507" font-family='"Liberation Sans", sans-serif' font-size="9.2" fill="#a3a3a3" text-anchor="end" textLength="10.4" lengthAdjust="spacingAndGlyphs" stroke="#a3a3a3" stroke-width="0.25">F2</text>
<line x1="27" y1="510.7" x2="72.6" y2="510.7" stroke="#393939" stroke-width="1"/>
<text x="69.6" y="519.9" font-family='"Liberation Sans", sans-serif' font-size="9.2" fill="#a3a3a3" text-anchor="end" textLength="10.4" lengthAdjust="spacingAndGlyphs" stroke="#a3a3a3" stroke-width="0.25">E2</text>
<rect x="72.6" y="523.3" width="31.8" height="12.5" fill="#161616"/>
<rect x="72.6" y="524.1" width="31.4" height="10.7" fill="url(#g8)"/>
<line x1="27" y1="523.6" x2="72.6" y2="523.6" stroke="#393939" stroke-width="1"/>
<text x="69.6" y="532.8" font-family='"Liberation Sans", sans-serif' font-size="9.2" fill="#a3a3a3" text-anchor="end" textLength="15.8" lengthAdjust="spacingAndGlyphs" stroke="#a3a3a3" stroke-width="0.25">D#2</text>
<line x1="27" y1="536.5" x2="72.6" y2="536.5" stroke="#393939" stroke-width="1"/>
<text x="69.6" y="545.7" font-family='"Liberation Sans", sans-serif' font-size="9.2" fill="#a3a3a3" text-anchor="end" textLength="10.4" lengthAdjust="spacingAndGlyphs" stroke="#a3a3a3" stroke-width="0.25">D2</text>
</g>
<rect x="118.2" y="103" width="1.2" height="440.3" fill="#565656"/>
<rect x="27" y="65" width="60" height="38.2" fill="#444444"/>
<rect x="87" y="65" width="31.4" height="38.2" fill="#545454"/>
<rect x="118.4" y="65" width="1.4" height="38.6" fill="#2a2a2a"/>
<line x1="27.5" y1="65" x2="27.5" y2="103" stroke="#404040" stroke-width="1"/>
<rect x="28" y="101" width="28.6" height="2.1" fill="#f8911c"/>
<rect x="37.6" y="79.8" width="9.4" height="1.8" fill="#f8911c"/>
<rect x="37.6" y="83.1" width="9.4" height="1.8" fill="#f8911c"/>
<rect x="37.6" y="86.4" width="9.4" height="1.8" fill="#f8911c"/>
<rect x="45.4" y="79.8" width="1.6" height="8.4" fill="#f8911c"/>
<rect x="66.6" y="79.8" width="1.7" height="1.6" fill="#e8e8e8"/>
<rect x="66.6" y="82" width="1.7" height="1.6" fill="#e8e8e8"/>
<rect x="66.6" y="84.2" width="1.7" height="1.6" fill="#e8e8e8"/>
<rect x="66.6" y="86.4" width="1.7" height="1.6" fill="#e8e8e8"/>
<rect x="69" y="79.8" width="1.7" height="1.6" fill="#e8e8e8"/>
<rect x="69" y="82" width="1.7" height="1.6" fill="#e8e8e8"/>
<rect x="69" y="84.2" width="1.7" height="1.6" fill="#e8e8e8"/>
<rect x="69" y="86.4" width="1.7" height="1.6" fill="#e8e8e8"/>
<rect x="71.4" y="79.8" width="1.7" height="1.6" fill="#e8e8e8"/>
<rect x="71.4" y="82" width="1.7" height="1.6" fill="#e8e8e8"/>
<rect x="71.4" y="84.2" width="1.7" height="1.6" fill="#e8e8e8"/>
<rect x="71.4" y="86.4" width="1.7" height="1.6" fill="#e8e8e8"/>
<rect x="73.8" y="79.8" width="1.7" height="1.6" fill="#e8e8e8"/>
<rect x="73.8" y="82" width="1.7" height="1.6" fill="#e8e8e8"/>
<rect x="73.8" y="84.2" width="1.7" height="1.6" fill="#e8e8e8"/>
<rect x="73.8" y="86.4" width="1.7" height="1.6" fill="#e8e8e8"/>
<path d="M98.4 77.6 V88.6 L101 86.2 L102.8 90.4 L104.4 89.7 L102.6 85.6 H106.2 Z" fill="#ffffff"/>
<path d="M111.4 83.2 H115 L113.2 85.2 Z" fill="#d0d0d0"/>
<rect x="27" y="543.3" width="92" height="1.6" fill="#2a2a2a"/>
<rect x="118.6" y="543.5" width="1076" height="1.7" fill="#0a0a0a"/>
<rect x="1194.6" y="65" width="1.5" height="637" fill="#3c3c3c"/>
<clipPath id="vclip"><rect x="119.3" y="545" width="1075.3" height="156.6"/></clipPath>
<g clip-path="url(#vclip)">
<rect x="119.3" y="545" width="1075.3" height="156.6" fill="#a6a6a6"/>
<rect x="841.6" y="545" width="291.9" height="156.6" fill="#b0b0b0"/>
<line x1="135.98" y1="545" x2="135.98" y2="701.6" stroke="#ffffff" stroke-width="1" opacity="0.08"/>
<line x1="160.3" y1="545" x2="160.3" y2="701.6" stroke="#ffffff" stroke-width="1" opacity="0.17"/>
<line x1="184.62" y1="545" x2="184.62" y2="701.6" stroke="#ffffff" stroke-width="1" opacity="0.08"/>
<line x1="208.95" y1="545" x2="208.95" y2="701.6" stroke="#ffffff" stroke-width="1" opacity="0.08"/>
<line x1="233.28" y1="545" x2="233.28" y2="701.6" stroke="#ffffff" stroke-width="1" opacity="0.08"/>
<line x1="257.6" y1="545" x2="257.6" y2="701.6" stroke="#ffffff" stroke-width="1" opacity="0.17"/>
<line x1="281.93" y1="545" x2="281.93" y2="701.6" stroke="#ffffff" stroke-width="1" opacity="0.08"/>
<line x1="306.25" y1="545" x2="306.25" y2="701.6" stroke="#ffffff" stroke-width="1" opacity="0.08"/>
<line x1="330.58" y1="545" x2="330.58" y2="701.6" stroke="#ffffff" stroke-width="1" opacity="0.08"/>
<line x1="354.9" y1="545" x2="354.9" y2="701.6" stroke="#000000" stroke-width="1" opacity="0.12"/>
<line x1="379.23" y1="545" x2="379.23" y2="701.6" stroke="#ffffff" stroke-width="1" opacity="0.08"/>
<line x1="403.55" y1="545" x2="403.55" y2="701.6" stroke="#ffffff" stroke-width="1" opacity="0.08"/>
<line x1="427.88" y1="545" x2="427.88" y2="701.6" stroke="#ffffff" stroke-width="1" opacity="0.08"/>
<line x1="452.2" y1="545" x2="452.2" y2="701.6" stroke="#ffffff" stroke-width="1" opacity="0.17"/>
<line x1="476.52" y1="545" x2="476.52" y2="701.6" stroke="#ffffff" stroke-width="1" opacity="0.08"/>
<line x1="500.85" y1="545" x2="500.85" y2="701.6" stroke="#ffffff" stroke-width="1" opacity="0.08"/>
<line x1="525.17" y1="545" x2="525.17" y2="701.6" stroke="#ffffff" stroke-width="1" opacity="0.08"/>
<line x1="549.5" y1="545" x2="549.5" y2="701.6" stroke="#ffffff" stroke-width="1" opacity="0.17"/>
<line x1="573.83" y1="545" x2="573.83" y2="701.6" stroke="#ffffff" stroke-width="1" opacity="0.08"/>
<line x1="598.15" y1="545" x2="598.15" y2="701.6" stroke="#ffffff" stroke-width="1" opacity="0.08"/>
<line x1="622.48" y1="545" x2="622.48" y2="701.6" stroke="#ffffff" stroke-width="1" opacity="0.08"/>
<line x1="646.8" y1="545" x2="646.8" y2="701.6" stroke="#ffffff" stroke-width="1" opacity="0.17"/>
<line x1="671.12" y1="545" x2="671.12" y2="701.6" stroke="#ffffff" stroke-width="1" opacity="0.08"/>
<line x1="695.45" y1="545" x2="695.45" y2="701.6" stroke="#ffffff" stroke-width="1" opacity="0.08"/>
<line x1="719.78" y1="545" x2="719.78" y2="701.6" stroke="#ffffff" stroke-width="1" opacity="0.08"/>
<line x1="744.1" y1="545" x2="744.1" y2="701.6" stroke="#000000" stroke-width="1" opacity="0.12"/>
<line x1="768.42" y1="545" x2="768.42" y2="701.6" stroke="#ffffff" stroke-width="1" opacity="0.08"/>
<line x1="792.75" y1="545" x2="792.75" y2="701.6" stroke="#ffffff" stroke-width="1" opacity="0.08"/>
<line x1="817.08" y1="545" x2="817.08" y2="701.6" stroke="#ffffff" stroke-width="1" opacity="0.08"/>
<line x1="841.4" y1="545" x2="841.4" y2="701.6" stroke="#ffffff" stroke-width="1" opacity="0.17"/>
<line x1="865.72" y1="545" x2="865.72" y2="701.6" stroke="#ffffff" stroke-width="1" opacity="0.08"/>
<line x1="890.05" y1="545" x2="890.05" y2="701.6" stroke="#ffffff" stroke-width="1" opacity="0.08"/>
<line x1="914.38" y1="545" x2="914.38" y2="701.6" stroke="#ffffff" stroke-width="1" opacity="0.08"/>
<line x1="938.7" y1="545" x2="938.7" y2="701.6" stroke="#ffffff" stroke-width="1" opacity="0.17"/>
<line x1="963.03" y1="545" x2="963.03" y2="701.6" stroke="#ffffff" stroke-width="1" opacity="0.08"/>
<line x1="987.35" y1="545" x2="987.35" y2="701.6" stroke="#ffffff" stroke-width="1" opacity="0.08"/>
<line x1="1011.67" y1="545" x2="1011.67" y2="701.6" stroke="#ffffff" stroke-width="1" opacity="0.08"/>
<line x1="1036" y1="545" x2="1036" y2="701.6" stroke="#ffffff" stroke-width="1" opacity="0.17"/>
<line x1="1060.33" y1="545" x2="1060.33" y2="701.6" stroke="#ffffff" stroke-width="1" opacity="0.08"/>
<line x1="1084.65" y1="545" x2="1084.65" y2="701.6" stroke="#ffffff" stroke-width="1" opacity="0.08"/>
<line x1="1108.97" y1="545" x2="1108.97" y2="701.6" stroke="#ffffff" stroke-width="1" opacity="0.08"/>
<line x1="1133.3" y1="545" x2="1133.3" y2="701.6" stroke="#000000" stroke-width="1" opacity="0.12"/>
<line x1="1157.62" y1="545" x2="1157.62" y2="701.6" stroke="#ffffff" stroke-width="1" opacity="0.08"/>
<line x1="1181.95" y1="545" x2="1181.95" y2="701.6" stroke="#ffffff" stroke-width="1" opacity="0.08"/>
<line x1="841.9" y1="545" x2="841.9" y2="701.6" stroke="#bcbcbc" stroke-width="1.1"/>
<line x1="1133.2" y1="545" x2="1133.2" y2="701.6" stroke="#c4c4c4" stroke-width="1.3"/>
<rect x="119.3" y="697.4" width="1075.3" height="4.2" fill="#ffffff" opacity="0.28"/>
<rect x="119.3" y="545" width="3.5" height="156.6" fill="url(#g9)"/>
<rect x="157.3" y="554" width="6.2" height="80" fill="url(#g10)"/>
<rect x="254.5" y="539.3" width="6.2" height="100" fill="url(#g11)"/>
<rect x="497.7" y="532" width="6.2" height="96" fill="url(#g12)"/>
<rect x="643.6" y="620" width="6.2" height="77" fill="url(#g13)"/>
<rect x="741" y="574.6" width="6.2" height="60" fill="url(#g14)"/>
<rect x="765.2" y="574.5" width="6.2" height="44" fill="url(#g15)"/>
<rect x="789.6" y="536.4" width="6.2" height="28" fill="url(#g16)"/>
<rect x="838.1" y="521.1" width="6.4" height="144" fill="url(#g17)"/>
<rect x="886.8" y="545" width="6.2" height="152" fill="url(#g18)"/>
<rect x="1032.7" y="551.8" width="6.2" height="92" fill="url(#g19)"/>
<g opacity="1">
<path d="M119 635.8 L143 626 L173 613.8 L206 600.3 L243.3 585.5 L284.8 568.4 L331 550.4" fill="none" stroke="#898987" stroke-width="0.9" opacity="0.75"/>
<path d="M143 626V696.8M173 613.8V696.8M206 600.3V696.8M243.3 585.5V696.8M284.8 568.4V696.8" fill="none" stroke="#898987" stroke-width="1.5"/>
<circle cx="143" cy="626" r="1.7" fill="#898987"/>
<circle cx="173" cy="613.8" r="1.7" fill="#898987"/>
<circle cx="206" cy="600.3" r="1.7" fill="#898987"/>
<circle cx="243.3" cy="585.5" r="1.7" fill="#898987"/>
<circle cx="284.8" cy="568.4" r="1.7" fill="#898987"/>
</g>
<g opacity="1">
<path d="M354.9 654 L361 653.6 L366.3 653.2 L374.2 652.4 L385.7 651.6 L401 650.4 L422 649 L450.3 646 L485.8 641.6 L531.5 633.4 L588.2 619.2 L658.6 594.7 L743.7 550.4" fill="none" stroke="#988889" stroke-width="0.9" opacity="0.75"/>
<path d="M361 653.6V696.8M366.3 653.2V696.8M374.2 652.4V696.8M385.7 651.6V696.8M401 650.4V696.8M422 649V696.8M450.3 646V696.8M485.8 641.6V696.8M531.5 633.4V696.8M588.2 619.2V696.8M658.6 594.7V696.8" fill="none" stroke="#988889" stroke-width="1.5"/>
<circle cx="361" cy="653.6" r="1.7" fill="#988889"/>
<circle cx="366.3" cy="653.2" r="1.7" fill="#988889"/>
<circle cx="374.2" cy="652.4" r="1.7" fill="#988889"/>
<circle cx="385.7" cy="651.6" r="1.7" fill="#988889"/>
<circle cx="401" cy="650.4" r="1.7" fill="#988889"/>
<circle cx="422" cy="649" r="1.7" fill="#988889"/>
<circle cx="450.3" cy="646" r="1.7" fill="#988889"/>
<circle cx="485.8" cy="641.6" r="1.7" fill="#988889"/>
<circle cx="531.5" cy="633.4" r="1.7" fill="#988889"/>
<circle cx="588.2" cy="619.2" r="1.7" fill="#988889"/>
<circle cx="658.6" cy="594.7" r="1.7" fill="#988889"/>
</g>
<g opacity="1">
<path d="M452.2 550.4 L480.2 550.4 L507 550.4 L532.6 550.4 L557 550.4 L580 550.5 L602.4 550.8 L623.3 551.7 L643.6 552.4 L662.7 553.5 L681 555.3 L698.2 557.1 L714.9 559.4 L730.6 561.6 L745.3 564.3 L759.7 567.5 L773 570.6 L785.3 574.2 L797.3 577.8 L808.6 581.6 L819.4 585.7 L829.5 589.5 L839 594.2 L847.5 599 L856 602.6 L864 606.4 L871.6 610.4 L878.6 614.3 L885 618.3 L891 622 L897 626 L902.2 630 L907 633.6 L911.9 637.2 L916 640.6 L920.2 643.5 L924 646.9 L927.4 649.8 L930.3 652.2 L933 654.2 L935.7 656.2 L938.6 658.8" fill="none" stroke="#898b77" stroke-width="0.9" opacity="0.75"/>
<path d="M480.2 550.4V696.8M507 550.4V696.8M532.6 550.4V696.8M557 550.4V696.8M580 550.5V696.8M602.4 550.8V696.8M623.3 551.7V696.8M643.6 552.4V696.8M662.7 553.5V696.8M681 555.3V696.8M698.2 557.1V696.8M714.9 559.4V696.8M730.6 561.6V696.8M745.3 564.3V696.8M759.7 567.5V696.8M773 570.6V696.8M785.3 574.2V696.8M797.3 577.8V696.8M808.6 581.6V696.8M819.4 585.7V696.8M829.5 589.5V696.8M839 594.2V696.8M847.5 599V696.8M856 602.6V696.8M864 606.4V696.8M871.6 610.4V696.8M878.6 614.3V696.8M885 618.3V696.8M891 622V696.8M897 626V696.8M902.2 630V696.8M907 633.6V696.8M911.9 637.2V696.8M916 640.6V696.8M920.2 643.5V696.8M924 646.9V696.8M927.4 649.8V696.8M930.3 652.2V696.8M933 654.2V696.8M935.7 656.2V696.8" fill="none" stroke="#898b77" stroke-width="1.5"/>
<circle cx="480.2" cy="550.4" r="1.7" fill="#898b77"/>
<circle cx="507" cy="550.4" r="1.7" fill="#898b77"/>
<circle cx="532.6" cy="550.4" r="1.7" fill="#898b77"/>
<circle cx="557" cy="550.4" r="1.7" fill="#898b77"/>
<circle cx="580" cy="550.5" r="1.7" fill="#898b77"/>
<circle cx="602.4" cy="550.8" r="1.7" fill="#898b77"/>
<circle cx="623.3" cy="551.7" r="1.7" fill="#898b77"/>
<circle cx="643.6" cy="552.4" r="1.7" fill="#898b77"/>
<circle cx="662.7" cy="553.5" r="1.7" fill="#898b77"/>
<circle cx="681" cy="555.3" r="1.7" fill="#898b77"/>
<circle cx="698.2" cy="557.1" r="1.7" fill="#898b77"/>
<circle cx="714.9" cy="559.4" r="1.7" fill="#898b77"/>
<circle cx="730.6" cy="561.6" r="1.7" fill="#898b77"/>
<circle cx="745.3" cy="564.3" r="1.7" fill="#898b77"/>
<circle cx="759.7" cy="567.5" r="1.7" fill="#898b77"/>
<circle cx="773" cy="570.6" r="1.7" fill="#898b77"/>
<circle cx="785.3" cy="574.2" r="1.7" fill="#898b77"/>
<circle cx="797.3" cy="577.8" r="1.7" fill="#898b77"/>
<circle cx="808.6" cy="581.6" r="1.7" fill="#898b77"/>
<circle cx="819.4" cy="585.7" r="1.7" fill="#898b77"/>
<circle cx="829.5" cy="589.5" r="1.7" fill="#898b77"/>
<circle cx="839" cy="594.2" r="1.7" fill="#898b77"/>
<circle cx="847.5" cy="599" r="1.7" fill="#898b77"/>
<circle cx="856" cy="602.6" r="1.7" fill="#898b77"/>
<circle cx="864" cy="606.4" r="1.7" fill="#898b77"/>
<circle cx="871.6" cy="610.4" r="1.7" fill="#898b77"/>
<circle cx="878.6" cy="614.3" r="1.7" fill="#898b77"/>
<circle cx="885" cy="618.3" r="1.7" fill="#898b77"/>
<circle cx="891" cy="622" r="1.7" fill="#898b77"/>
<circle cx="897" cy="626" r="1.7" fill="#898b77"/>
<circle cx="902.2" cy="630" r="1.7" fill="#898b77"/>
<circle cx="907" cy="633.6" r="1.7" fill="#898b77"/>
<circle cx="911.9" cy="637.2" r="1.7" fill="#898b77"/>
<circle cx="916" cy="640.6" r="1.7" fill="#898b77"/>
<circle cx="920.2" cy="643.5" r="1.7" fill="#898b77"/>
<circle cx="924" cy="646.9" r="1.7" fill="#898b77"/>
<circle cx="927.4" cy="649.8" r="1.7" fill="#898b77"/>
<circle cx="930.3" cy="652.2" r="1.7" fill="#898b77"/>
<circle cx="933" cy="654.2" r="1.7" fill="#898b77"/>
<circle cx="935.7" cy="656.2" r="1.7" fill="#898b77"/>
</g>
<g opacity="1">
<path d="M792.7 550.4 L798 552.28 L804.8 554.84 L813 557.92 L823.4 561.83 L836.7 566.83 L854 573.34 L874.5 581.04 L899.3 590.37 L929.4 601.69 L965 615.07 L1007.3 630.98 L1057 649.66 L1115 671.47 L1182 696.8" fill="none" stroke="#82909c" stroke-width="0.9" opacity="0.75"/>
<path d="M798 552.28V696.8M804.8 554.84V696.8M813 557.92V696.8M823.4 561.83V696.8M836.7 566.83V696.8M854 573.34V696.8M874.5 581.04V696.8M899.3 590.37V696.8M929.4 601.69V696.8M965 615.07V696.8M1007.3 630.98V696.8M1057 649.66V696.8M1115 671.47V696.8" fill="none" stroke="#82909c" stroke-width="1.5"/>
<circle cx="798" cy="552.28" r="1.7" fill="#82909c"/>
<circle cx="804.8" cy="554.84" r="1.7" fill="#82909c"/>
<circle cx="813" cy="557.92" r="1.7" fill="#82909c"/>
<circle cx="823.4" cy="561.83" r="1.7" fill="#82909c"/>
<circle cx="836.7" cy="566.83" r="1.7" fill="#82909c"/>
<circle cx="854" cy="573.34" r="1.7" fill="#82909c"/>
<circle cx="874.5" cy="581.04" r="1.7" fill="#82909c"/>
<circle cx="899.3" cy="590.37" r="1.7" fill="#82909c"/>
<circle cx="929.4" cy="601.69" r="1.7" fill="#82909c"/>
<circle cx="965" cy="615.07" r="1.7" fill="#82909c"/>
<circle cx="1007.3" cy="630.98" r="1.7" fill="#82909c"/>
<circle cx="1057" cy="649.66" r="1.7" fill="#82909c"/>
<circle cx="1115" cy="671.47" r="1.7" fill="#82909c"/>
</g>
<g opacity="1">
<path d="M889.9 696.8 L898.2 693.2 L906.5 689.6 L914.8 686 L923.1 682.4 L931.4 678.81 L939.7 675.21 L948 671.61 L956.3 668.01 L964.6 664.41 L972.9 660.81 L981.2 657.21 L989.5 653.61 L997.8 650.01 L1006.1 646.42 L1014.4 642.82 L1022.7 639.22 L1031 635.62 L1039.3 632.02 L1047.6 628.42 L1055.9 624.82 L1064.2 621.22 L1072.5 617.62 L1080.8 614.03 L1089.1 610.43 L1097.4 606.83 L1105.7 603.23 L1114 599.63 L1122.3 596.03 L1130.6 592.43 L1138.9 588.83 L1147.2 585.23 L1155.5 581.64 L1163.8 578.04 L1172.1 574.44 L1180.4 570.84 L1188.7 567.24 L1197 563.64 L1200 562.34" fill="none" stroke="#84919b" stroke-width="0.9" opacity="0.75"/>
<path d="M898.2 693.2V696.8M906.5 689.6V696.8M914.8 686V696.8M923.1 682.4V696.8M931.4 678.81V696.8M939.7 675.21V696.8M948 671.61V696.8M956.3 668.01V696.8M964.6 664.41V696.8M972.9 660.81V696.8M981.2 657.21V696.8M989.5 653.61V696.8M997.8 650.01V696.8M1006.1 646.42V696.8M1014.4 642.82V696.8M1022.7 639.22V696.8M1031 635.62V696.8M1039.3 632.02V696.8M1047.6 628.42V696.8M1055.9 624.82V696.8M1064.2 621.22V696.8M1072.5 617.62V696.8M1080.8 614.03V696.8M1089.1 610.43V696.8M1097.4 606.83V696.8M1105.7 603.23V696.8M1114 599.63V696.8M1122.3 596.03V696.8M1130.6 592.43V696.8M1138.9 588.83V696.8M1147.2 585.23V696.8M1155.5 581.64V696.8M1163.8 578.04V696.8M1172.1 574.44V696.8M1180.4 570.84V696.8M1188.7 567.24V696.8M1197 563.64V696.8" fill="none" stroke="#84919b" stroke-width="1.5"/>
<circle cx="898.2" cy="693.2" r="1.7" fill="#84919b"/>
<circle cx="906.5" cy="689.6" r="1.7" fill="#84919b"/>
<circle cx="914.8" cy="686" r="1.7" fill="#84919b"/>
<circle cx="923.1" cy="682.4" r="1.7" fill="#84919b"/>
<circle cx="931.4" cy="678.81" r="1.7" fill="#84919b"/>
<circle cx="939.7" cy="675.21" r="1.7" fill="#84919b"/>
<circle cx="948" cy="671.61" r="1.7" fill="#84919b"/>
<circle cx="956.3" cy="668.01" r="1.7" fill="#84919b"/>
<circle cx="964.6" cy="664.41" r="1.7" fill="#84919b"/>
<circle cx="972.9" cy="660.81" r="1.7" fill="#84919b"/>
<circle cx="981.2" cy="657.21" r="1.7" fill="#84919b"/>
<circle cx="989.5" cy="653.61" r="1.7" fill="#84919b"/>
<circle cx="997.8" cy="650.01" r="1.7" fill="#84919b"/>
<circle cx="1006.1" cy="646.42" r="1.7" fill="#84919b"/>
<circle cx="1014.4" cy="642.82" r="1.7" fill="#84919b"/>
<circle cx="1022.7" cy="639.22" r="1.7" fill="#84919b"/>
<circle cx="1031" cy="635.62" r="1.7" fill="#84919b"/>
<circle cx="1039.3" cy="632.02" r="1.7" fill="#84919b"/>
<circle cx="1047.6" cy="628.42" r="1.7" fill="#84919b"/>
<circle cx="1055.9" cy="624.82" r="1.7" fill="#84919b"/>
<circle cx="1064.2" cy="621.22" r="1.7" fill="#84919b"/>
<circle cx="1072.5" cy="617.62" r="1.7" fill="#84919b"/>
<circle cx="1080.8" cy="614.03" r="1.7" fill="#84919b"/>
<circle cx="1089.1" cy="610.43" r="1.7" fill="#84919b"/>
<circle cx="1097.4" cy="606.83" r="1.7" fill="#84919b"/>
<circle cx="1105.7" cy="603.23" r="1.7" fill="#84919b"/>
<circle cx="1114" cy="599.63" r="1.7" fill="#84919b"/>
<circle cx="1122.3" cy="596.03" r="1.7" fill="#84919b"/>
<circle cx="1130.6" cy="592.43" r="1.7" fill="#84919b"/>
<circle cx="1138.9" cy="588.83" r="1.7" fill="#84919b"/>
<circle cx="1147.2" cy="585.23" r="1.7" fill="#84919b"/>
<circle cx="1155.5" cy="581.64" r="1.7" fill="#84919b"/>
<circle cx="1163.8" cy="578.04" r="1.7" fill="#84919b"/>
<circle cx="1172.1" cy="574.44" r="1.7" fill="#84919b"/>
<circle cx="1180.4" cy="570.84" r="1.7" fill="#84919b"/>
<circle cx="1188.7" cy="567.24" r="1.7" fill="#84919b"/>
<circle cx="1197" cy="563.64" r="1.7" fill="#84919b"/>
</g>
<line x1="160.4" y1="594" x2="160.4" y2="696.8" stroke="#22260a" stroke-width="1.7"/>
<circle cx="160.4" cy="594" r="2.75" fill="#c5e04c" stroke="#22260a" stroke-width="1"/>
<circle cx="160.4" cy="594" r="0.9" fill="#ffffff" opacity="0.25"/>
<line x1="233.3" y1="605.5" x2="233.3" y2="696.8" stroke="#2e1030" stroke-width="1.7"/>
<circle cx="233.3" cy="605.5" r="2.75" fill="#c66fc6" stroke="#2e1030" stroke-width="1"/>
<circle cx="233.3" cy="605.5" r="0.9" fill="#ffffff" opacity="0.25"/>
<line x1="257.8" y1="589.3" x2="257.8" y2="696.8" stroke="#3a2810" stroke-width="1.7"/>
<circle cx="257.8" cy="589.3" r="2.75" fill="#f0a648" stroke="#3a2810" stroke-width="1"/>
<circle cx="257.8" cy="589.3" r="0.9" fill="#ffffff" opacity="0.25"/>
<circle cx="331" cy="550.4" r="2.6" fill="#c8e848" stroke="#22260a" stroke-width="1"/>
<line x1="354.9" y1="599" x2="354.9" y2="696.8" stroke="#3a2810" stroke-width="1.7"/>
<circle cx="354.9" cy="599" r="2.75" fill="#f0a648" stroke="#3a2810" stroke-width="1"/>
<circle cx="354.9" cy="599" r="0.9" fill="#ffffff" opacity="0.25"/>
<circle cx="354.9" cy="654" r="2.6" fill="#c9606e" stroke="#4a2228" stroke-width="1"/>
<line x1="452.2" y1="550.4" x2="452.2" y2="696.8" stroke="#1e2206" stroke-width="1.7"/>
<circle cx="452.2" cy="550.4" r="2.75" fill="#cde64a" stroke="#1e2206" stroke-width="1"/>
<circle cx="452.2" cy="550.4" r="0.9" fill="#ffffff" opacity="0.25"/>
<line x1="500.9" y1="580" x2="500.9" y2="696.8" stroke="#26260a" stroke-width="1.7"/>
<circle cx="500.9" cy="580" r="2.75" fill="#e6e648" stroke="#26260a" stroke-width="1"/>
<circle cx="500.9" cy="580" r="0.9" fill="#ffffff" opacity="0.25"/>
<line x1="646.7" y1="658.8" x2="646.7" y2="696.8" stroke="#3a1a1e" stroke-width="1.7"/>
<circle cx="646.7" cy="658.8" r="2.75" fill="#c56872" stroke="#3a1a1e" stroke-width="1"/>
<circle cx="646.7" cy="658.8" r="0.9" fill="#ffffff" opacity="0.25"/>
<circle cx="743.7" cy="550.4" r="2.6" fill="#f05a6a" stroke="#4a2228" stroke-width="1"/>
<line x1="744.1" y1="604.6" x2="744.1" y2="696.8" stroke="#3a2640" stroke-width="1.5"/>
<circle cx="744.1" cy="604.6" r="2.75" fill="#c06cc4" stroke="#3a2640" stroke-width="1"/>
<circle cx="744.1" cy="604.6" r="0.9" fill="#ffffff" opacity="0.25"/>
<line x1="768.3" y1="596.5" x2="768.3" y2="696.8" stroke="#3e1418" stroke-width="1.7"/>
<circle cx="768.3" cy="596.5" r="2.75" fill="#f06070" stroke="#3e1418" stroke-width="1"/>
<circle cx="768.3" cy="596.5" r="0.9" fill="#ffffff" opacity="0.25"/>
<line x1="792.7" y1="550.4" x2="792.7" y2="696.8" stroke="#143248" stroke-width="1.7"/>
<circle cx="792.7" cy="550.4" r="2.75" fill="#48a6ee" stroke="#143248" stroke-width="1"/>
<circle cx="792.7" cy="550.4" r="0.9" fill="#ffffff" opacity="0.25"/>
<line x1="841.3" y1="593.1" x2="841.3" y2="696.8" stroke="#000000" stroke-width="1.9"/>
<circle cx="841.3" cy="593.1" r="2.9" fill="#000000" stroke="#000000" stroke-width="1"/>
<circle cx="841.3" cy="593.1" r="0.9" fill="#ffffff" opacity="0.25"/>
<line x1="838.7" y1="663.4" x2="844.7" y2="663.4" stroke="#222222" stroke-width="0.8"/>
<circle cx="889.9" cy="696.8" r="2.6" fill="#7f98ac" stroke="#2a3c4a" stroke-width="1"/>
<circle cx="938.6" cy="658.8" r="2.6" fill="#b4c45c" stroke="#3a401a" stroke-width="1"/>
<line x1="1035.8" y1="597.8" x2="1035.8" y2="696.8" stroke="#2a0e2c" stroke-width="1.7"/>
<circle cx="1035.8" cy="597.8" r="2.75" fill="#c46cc4" stroke="#2a0e2c" stroke-width="1"/>
<circle cx="1035.8" cy="597.8" r="0.9" fill="#ffffff" opacity="0.25"/>
<line x1="1133" y1="581.2" x2="1133" y2="696.8" stroke="#4a0e12" stroke-width="1.7"/>
<circle cx="1133" cy="581.2" r="2.75" fill="#f26272" stroke="#4a0e12" stroke-width="1"/>
<circle cx="1133" cy="581.2" r="0.9" fill="#ffffff" opacity="0.25"/>
<circle cx="1133" cy="623.3" r="2.6" fill="#d8d644" stroke="#3a3a10" stroke-width="1"/>
<line x1="1182" y1="642.8" x2="1182" y2="694.8" stroke="#3e221a" stroke-width="1.7"/>
<circle cx="1182" cy="642.8" r="2.75" fill="#e48664" stroke="#3e221a" stroke-width="1"/>
<circle cx="1182" cy="642.8" r="0.9" fill="#ffffff" opacity="0.25"/>
<circle cx="1182" cy="696.8" r="2.6" fill="#7590a4" stroke="#2a3c4a" stroke-width="1"/>
</g>
<rect x="27" y="545" width="91.5" height="157.2" fill="#414141"/>
<rect x="31" y="547.2" width="41.8" height="50.4" fill="#3a3a3a"/>
<line x1="27.5" y1="545" x2="27.5" y2="701.6" stroke="#404040" stroke-width="1"/>
<line x1="118.5" y1="545" x2="118.5" y2="701.6" stroke="#3c3c3c" stroke-width="1"/>
<circle cx="50.9" cy="565.6" r="1.9" fill="none" stroke="#f8911c" stroke-width="1.3"/>
<line x1="50.9" y1="567.6" x2="50.9" y2="572.6" stroke="#f8911c" stroke-width="1.4"/>
<text x="50.9" y="582.6" font-family='"Liberation Sans", sans-serif' font-size="7.5" fill="#f8911c" font-weight="bold" text-anchor="middle" textLength="26.2" lengthAdjust="spacingAndGlyphs">Velocity</text>
<path d="M95.4 562.8 L99.8 565 V570 L95.4 572.4 L91 570 V565 Z" fill="#a8a8a8"/>
<path d="M95.4 562.8 L99.8 565 L95.4 567.2 L91 565 Z" fill="#e6e6e6"/>
<path d="M91 565 L95.4 567.2 V572.4 L91 570 Z" fill="#c4c4c4"/>
<circle cx="95.4" cy="565" r="0.6" fill="#5a5a5a"/>
<circle cx="93.2" cy="568.8" r="0.5" fill="#5a5a5a"/>
<circle cx="97.6" cy="568.8" r="0.5" fill="#5a5a5a"/>
<text x="95.2" y="581.2" font-family='"Liberation Sans", sans-serif' font-size="7.5" fill="#e4e4e4" text-anchor="middle" textLength="23.6" lengthAdjust="spacingAndGlyphs" stroke="#e4e4e4" stroke-width="0.25">Chance</text>
<circle cx="51" cy="619.2" r="2.1" fill="#f0f0f0"/>
<line x1="54.1" y1="619.2" x2="55.6" y2="619.2" stroke="#dcdcdc" stroke-width="0.9"/>
<line x1="53.19" y1="621.39" x2="54.25" y2="622.45" stroke="#dcdcdc" stroke-width="0.9"/>
<line x1="51" y1="622.3" x2="51" y2="623.8" stroke="#dcdcdc" stroke-width="0.9"/>
<line x1="48.81" y1="621.39" x2="47.75" y2="622.45" stroke="#dcdcdc" stroke-width="0.9"/>
<line x1="47.9" y1="619.2" x2="46.4" y2="619.2" stroke="#dcdcdc" stroke-width="0.9"/>
<line x1="48.81" y1="617.01" x2="47.75" y2="615.95" stroke="#dcdcdc" stroke-width="0.9"/>
<line x1="51" y1="616.1" x2="51" y2="614.6" stroke="#dcdcdc" stroke-width="0.9"/>
<line x1="53.19" y1="617.01" x2="54.25" y2="615.95" stroke="#dcdcdc" stroke-width="0.9"/>
<text x="51.4" y="633.8" font-family='"Liberation Sans", sans-serif' font-size="7.5" fill="#e4e4e4" text-anchor="middle" textLength="21.8" lengthAdjust="spacingAndGlyphs" stroke="#e4e4e4" stroke-width="0.25">Timbre</text>
<line x1="95.2" y1="614.4" x2="95.2" y2="620" stroke="#f0f0f0" stroke-width="1.3"/>
<path d="M92.6 618.4 L95.2 621.4 L97.8 618.4 Z" fill="#f0f0f0"/>
<rect x="90.8" y="622.6" width="8.8" height="1.5" fill="#f0f0f0"/>
<text x="95" y="633.8" font-family='"Liberation Sans", sans-serif' font-size="7.5" fill="#e4e4e4" text-anchor="middle" textLength="26.6" lengthAdjust="spacingAndGlyphs" stroke="#e4e4e4" stroke-width="0.25">Pressure</text>
<path d="M46.8 668.6 H48.6 L51.6 666 V674.4 L48.6 671.8 H46.8 Z" fill="#f0f0f0"/>
<path d="M53.2 667.8 Q55 670.2 53.2 672.6" fill="none" stroke="#cfcfcf" stroke-width="1"/>
<path d="M55 666.4 Q57.4 670.2 55 674" fill="none" stroke="#9a9a9a" stroke-width="0.9"/>
<text x="51" y="684.9" font-family='"Liberation Sans", sans-serif' font-size="7.5" fill="#e4e4e4" text-anchor="middle" textLength="14.2" lengthAdjust="spacingAndGlyphs" stroke="#e4e4e4" stroke-width="0.25">Gain</text>
<path d="M88.4 674.4 L95.3 670.3 L102.2 674.4 Z" fill="#9c9c9c"/>
<path d="M88.4 666.2 L95.3 670.3 L88.4 674.4 Z M102.2 666.2 L95.3 670.3 L102.2 674.4 Z" fill="#dcdcdc"/>
<path d="M88.4 666.2 L102.2 674.4 M102.2 666.2 L88.4 674.4" fill="none" stroke="#f4f4f4" stroke-width="0.9"/>
<text x="93.9" y="684.9" font-family='"Liberation Sans", sans-serif' font-size="7.5" fill="#e4e4e4" text-anchor="middle" textLength="11.8" lengthAdjust="spacingAndGlyphs" stroke="#e4e4e4" stroke-width="0.25">Pan</text>
<rect x="7.1" y="702.2" width="1188.5" height="18.7" fill="#404040"/>
<rect x="7.1" y="702" width="1188.5" height="1" fill="#363636"/>
<path d="M16.2 707.8 L20.6 710 L16.2 712.2 L11.8 710 Z" fill="#e0e0e0"/>
<path d="M11.8 712.2 L16.2 714.4 L20.6 712.2 M11.8 714.4 L16.2 716.6 L20.6 714.4" fill="none" stroke="#c8c8c8" stroke-width="1"/>
<rect x="56.2" y="704.6" width="12.4" height="13.4" fill="#343434" rx="1.5"/>
<rect x="71.8" y="704.6" width="12.4" height="13.4" fill="#343434" rx="1.5"/>
<path d="M59 710.4 H60.8 L64.8 707.4 V716.6 L60.8 713.6 H59 Z" fill="#f8911c"/>
<rect x="74" y="711.4" width="1.2" height="5.2" fill="#f8911c"/>
<circle cx="74.6" cy="711.4" r="1.4" fill="#f8911c"/>
<rect x="77.4" y="709.4" width="1.2" height="7.2" fill="#f8911c"/>
<circle cx="78" cy="709.4" r="1.4" fill="#f8911c"/>
<rect x="80.8" y="711.8" width="1.2" height="4.8" fill="#f8911c"/>
<circle cx="81.4" cy="711.8" r="1.4" fill="#f8911c"/>
<path d="M91.6 708 V710.6 a2.1 2.1 0 0 0 4.2 0 V708 M93.7 712.7 V716.8" fill="none" stroke="#e8e8e8" stroke-width="1.2"/>
<line x1="107.4" y1="714.4" x2="111.4" y2="710.4" stroke="#e8e8e8" stroke-width="1.2"/>
<circle cx="107" cy="714.8" r="1.6" fill="#404040" stroke="#e8e8e8" stroke-width="1.2"/>
<circle cx="111.8" cy="710" r="1.6" fill="#404040" stroke="#e8e8e8" stroke-width="1.2"/>
<path d="M127.2 709 V716 L122.4 712.5 Z" fill="#b4b4b4"/>
<rect x="227.5" y="707" width="661.3" height="9.8" fill="#868686" rx="2.2"/>
<path d="M1096.6 708.8 V715.8 L1102 712.3 Z" fill="#b0b0b0"/>
<text x="1149" y="716.2" font-family='"Liberation Sans", sans-serif' font-size="9.6" fill="#ececec" textLength="17.6" lengthAdjust="spacingAndGlyphs">1/16</text>
<path d="M1170.2 713.6 H1173.6 L1171.9 711.4 Z" fill="#d8d8d8"/>
<path d="M1185.4 710.2 H1188.6 M1187.4 708.6 L1189.2 710.2 L1187.4 711.8" fill="none" stroke="#9a9a9a" stroke-width="1"/>
<rect x="1185.4" y="712.2" width="1.1" height="4.4" fill="#8a8a8a"/>
<rect x="1187.8" y="712.2" width="1.1" height="4.4" fill="#8a8a8a"/>
<circle cx="15.4" cy="733.6" r="1.3" fill="#e6e6e6"/>
<path d="M13.8 736 H16.4 V739 H17.4 V740.2 H13.6 V739 H14.6 V737.2 H13.8 Z" fill="#e6e6e6"/>
<line x1="29.9" y1="728" x2="29.9" y2="744.2" stroke="#8a8a8a" stroke-width="1.4"/>
<text x="42.8" y="739.6" font-family='"Liberation Sans", sans-serif' font-size="9.7" fill="#e8e8e8" font-weight="bold" textLength="40.2" lengthAdjust="spacingAndGlyphs">ARRANGE</text>
<text x="94.8" y="739.6" font-family='"Liberation Sans", sans-serif' font-size="9.7" fill="#e8e8e8" font-weight="bold" textLength="15.8" lengthAdjust="spacingAndGlyphs">MIX</text>
<text x="123" y="739.6" font-family='"Liberation Sans", sans-serif' font-size="9.7" fill="#f8911c" font-weight="bold" textLength="18.6" lengthAdjust="spacingAndGlyphs">EDIT</text>
<line x1="154.2" y1="728" x2="154.2" y2="744.2" stroke="#8a8a8a" stroke-width="1.4"/>
<rect x="165" y="731.6" width="10.4" height="9" fill="none" rx="1.8" stroke="#ececec" stroke-width="1.7"/>
<rect x="190.2" y="731.4" width="2" height="9.2" fill="#f0f0f0"/>
<rect x="193.6" y="731.4" width="2" height="9.2" fill="#f0f0f0"/>
<rect x="197" y="731.4" width="2" height="9.2" fill="#f0f0f0"/>
<path d="M1075 732 H1078.4 V733.4 H1084 V739.8 H1075 Z" fill="#e6e6e6"/>
<path d="M1099.8 731 H1105 L1107.8 733.8 V740.6 H1099.8 Z" fill="#e6e6e6"/>
<path d="M1105 731 V733.8 H1107.8" fill="none" stroke="#2e2e2e" stroke-width="0.7"/>
<path d="M1126 733.6 H1132.6 M1126.4 731.4 L1123.8 733.6 L1126.4 735.8" fill="none" stroke="#e6e6e6" stroke-width="1.5"/>
<path d="M1123.8 738 H1130.4 M1130.2 735.8 L1132.8 738 L1130.2 740.2" fill="none" stroke="#e6e6e6" stroke-width="1.5"/>
<path d="M1150.4 731.4 a1 1 0 0 1 2 0 V734.6 H1155 a1.2 1.2 0 0 1 1.2 1.2 V740.4 H1150.6 L1148.2 736.6 L1149.4 735.8 L1150.4 736.8 Z" fill="#e6e6e6"/>
<line x1="1169" y1="728" x2="1169" y2="744.2" stroke="#8a8a8a" stroke-width="1.4"/>
<rect x="1179.8" y="731.2" width="9.2" height="9" fill="#f0f0f0"/>
<rect x="1182.52" y="731.2" width="0.7" height="9" fill="#2e2e2e"/>
<rect x="1181.87" y="731.2" width="2" height="5.22" fill="#2e2e2e"/>
<rect x="1185.58" y="731.2" width="0.7" height="9" fill="#2e2e2e"/>
<rect x="1184.93" y="731.2" width="2" height="5.22" fill="#2e2e2e"/>
</svg>
</body></html>
